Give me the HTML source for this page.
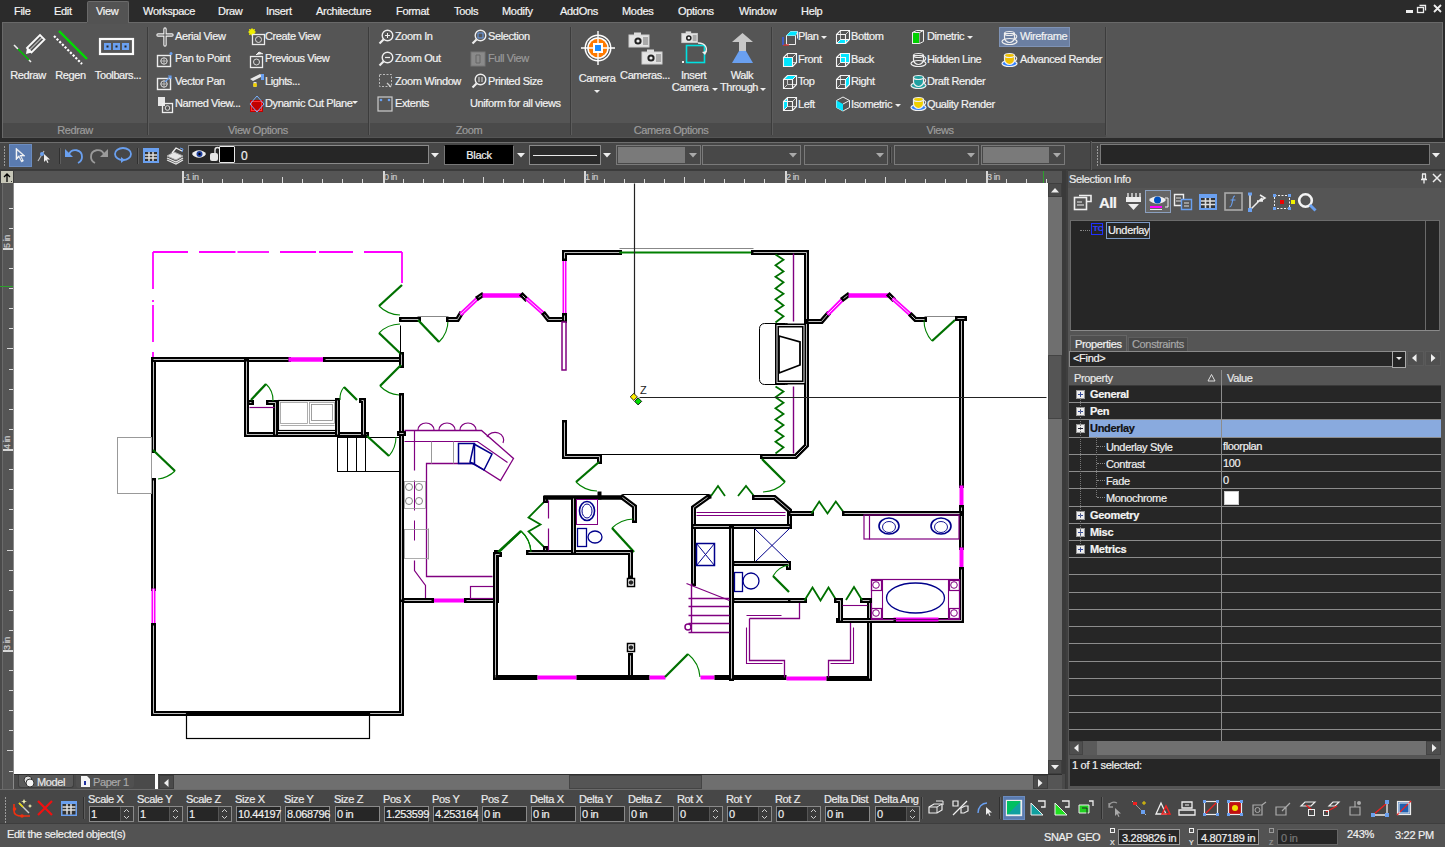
<!DOCTYPE html><html><head><meta charset="utf-8"><style>
*{margin:0;padding:0;box-sizing:border-box}
html,body{width:1445px;height:847px;overflow:hidden;background:#2b2b2b;font-family:"Liberation Sans",sans-serif;font-size:12px;color:#f0f0f0}
.a{position:absolute}
.t{position:absolute;white-space:nowrap;color:#f2f2f2;letter-spacing:-0.25px;-webkit-text-stroke:0.2px currentColor}
svg{position:absolute;overflow:visible}
</style></head><body><div class="a" style="left:0px;top:0px;width:1445px;height:22px;background:#2b2b2b"></div>
<div class="a" style="left:87px;top:1px;width:42px;height:22px;background:#535353;border:1px solid #6a6a6a;border-bottom:none;border-radius:2px 2px 0 0"></div>
<div class="t" style="left:14px;top:5px;font-size:11px;line-height:13px;color:#f4f4f4;letter-spacing:-0.3px">File</div>
<div class="t" style="left:54px;top:5px;font-size:11px;line-height:13px;color:#f4f4f4;letter-spacing:-0.3px">Edit</div>
<div class="t" style="left:96px;top:5px;font-size:11px;line-height:13px;color:#f4f4f4;letter-spacing:-0.3px">View</div>
<div class="t" style="left:143px;top:5px;font-size:11px;line-height:13px;color:#f4f4f4;letter-spacing:-0.3px">Workspace</div>
<div class="t" style="left:218px;top:5px;font-size:11px;line-height:13px;color:#f4f4f4;letter-spacing:-0.3px">Draw</div>
<div class="t" style="left:266px;top:5px;font-size:11px;line-height:13px;color:#f4f4f4;letter-spacing:-0.3px">Insert</div>
<div class="t" style="left:316px;top:5px;font-size:11px;line-height:13px;color:#f4f4f4;letter-spacing:-0.3px">Architecture</div>
<div class="t" style="left:396px;top:5px;font-size:11px;line-height:13px;color:#f4f4f4;letter-spacing:-0.3px">Format</div>
<div class="t" style="left:454px;top:5px;font-size:11px;line-height:13px;color:#f4f4f4;letter-spacing:-0.3px">Tools</div>
<div class="t" style="left:502px;top:5px;font-size:11px;line-height:13px;color:#f4f4f4;letter-spacing:-0.3px">Modify</div>
<div class="t" style="left:560px;top:5px;font-size:11px;line-height:13px;color:#f4f4f4;letter-spacing:-0.3px">AddOns</div>
<div class="t" style="left:622px;top:5px;font-size:11px;line-height:13px;color:#f4f4f4;letter-spacing:-0.3px">Modes</div>
<div class="t" style="left:678px;top:5px;font-size:11px;line-height:13px;color:#f4f4f4;letter-spacing:-0.3px">Options</div>
<div class="t" style="left:739px;top:5px;font-size:11px;line-height:13px;color:#f4f4f4;letter-spacing:-0.3px">Window</div>
<div class="t" style="left:801px;top:5px;font-size:11px;line-height:13px;color:#f4f4f4;letter-spacing:-0.3px">Help</div>
<div class="a" style="left:1406px;top:10px;width:7px;height:3px;background:#eee"></div>
<svg style="left:1416px;top:3px" width="12" height="12"><rect x="1.5" y="4.5" width="6" height="5" fill="none" stroke="#eee" stroke-width="1.3"/><path d="M3.5 2.5h6v5" fill="none" stroke="#eee" stroke-width="1.3"/></svg>
<svg style="left:1433px;top:4px" width="10" height="10"><path d="M1 1L8 8M8 1L1 8" stroke="#eee" stroke-width="1.8"/></svg>
<div class="a" style="left:2px;top:22px;width:1441px;height:117px;background:#555555;border:1px solid #696969;border-right-color:#6d6d6d;border-bottom-color:#696969"></div>
<div class="a" style="left:87px;top:22px;width:41px;height:2px;background:#535353"></div>
<div class="a" style="left:3px;top:123px;width:1103px;height:14px;background:#4a4a4a"></div>
<div class="a" style="left:147px;top:27px;width:1px;height:108px;background:#3c3c3c"></div>
<div class="a" style="left:148px;top:27px;width:1px;height:108px;background:#5c5c5c"></div>
<div class="a" style="left:368px;top:27px;width:1px;height:108px;background:#3c3c3c"></div>
<div class="a" style="left:369px;top:27px;width:1px;height:108px;background:#5c5c5c"></div>
<div class="a" style="left:570px;top:27px;width:1px;height:108px;background:#3c3c3c"></div>
<div class="a" style="left:571px;top:27px;width:1px;height:108px;background:#5c5c5c"></div>
<div class="a" style="left:771px;top:27px;width:1px;height:108px;background:#3c3c3c"></div>
<div class="a" style="left:772px;top:27px;width:1px;height:108px;background:#5c5c5c"></div>
<div class="a" style="left:1105px;top:27px;width:1px;height:108px;background:#3c3c3c"></div>
<div class="a" style="left:1106px;top:27px;width:1px;height:108px;background:#5c5c5c"></div>
<div class="t" style="left:15px;width:120px;text-align:center;top:123px;font-size:11px;line-height:14px;color:#9c9c9c;letter-spacing:-0.4px">Redraw</div>
<div class="t" style="left:198px;width:120px;text-align:center;top:123px;font-size:11px;line-height:14px;color:#9c9c9c;letter-spacing:-0.4px">View Options</div>
<div class="t" style="left:409px;width:120px;text-align:center;top:123px;font-size:11px;line-height:14px;color:#9c9c9c;letter-spacing:-0.4px">Zoom</div>
<div class="t" style="left:611px;width:120px;text-align:center;top:123px;font-size:11px;line-height:14px;color:#9c9c9c;letter-spacing:-0.4px">Camera Options</div>
<div class="t" style="left:880px;width:120px;text-align:center;top:123px;font-size:11px;line-height:14px;color:#9c9c9c;letter-spacing:-0.4px">Views</div>
<svg style="left:10px;top:30px" width="40" height="36">
<line x1="4" y1="15" x2="8" y2="19" stroke="#eee" stroke-width="1.6"/>
<line x1="8" y1="19" x2="19" y2="30" stroke="#00c000" stroke-width="1.6"/>
<line x1="19" y1="30" x2="21" y2="32" stroke="#eee" stroke-width="1.6"/>
<g transform="translate(1,-3)"><path d="M16 21 L29 8 L33.5 12.5 L20.5 25.5 Z" fill="none" stroke="#fafafa" stroke-width="1.8"/>
<path d="M16 21 L15 27 L20.5 25.5 Z" fill="#fafafa"/>
<path d="M18.5 23 L31 10.5" stroke="#fafafa" stroke-width="0.9"/></g>
</svg>
<svg style="left:52px;top:28px" width="40" height="38">
<line x1="7" y1="3" x2="35" y2="31" stroke="#00dd00" stroke-width="2.4"/>
<line x1="2" y1="8" x2="30" y2="36" stroke="#ffffff" stroke-width="2.2" stroke-dasharray="2.2 1.6"/>
</svg>
<svg style="left:98px;top:37px" width="38" height="20">
<rect x="2" y="2" width="33" height="15" fill="none" stroke="#fafafa" stroke-width="2.2"/>
<rect x="6" y="6" width="7" height="7" fill="#6aa0f0"/><rect x="15" y="6" width="7" height="7" fill="#6aa0f0"/><rect x="24" y="6" width="7" height="7" fill="#6aa0f0"/>
<rect x="8.5" y="8.5" width="2" height="2" fill="#222"/><rect x="17.5" y="8.5" width="2" height="2" fill="#222"/><rect x="26.5" y="8.5" width="2" height="2" fill="#222"/>
</svg>
<div class="t" style="left:-22px;top:69px;font-size:11px;line-height:13px;color:#f2f2f2;letter-spacing:-0.4px;width:100px;text-align:center">Redraw</div>
<div class="t" style="left:20.5px;top:69px;font-size:11px;line-height:13px;color:#f2f2f2;letter-spacing:-0.4px;width:100px;text-align:center">Regen</div>
<div class="t" style="left:68px;top:69px;font-size:11px;line-height:13px;color:#f2f2f2;letter-spacing:-0.4px;width:100px;text-align:center">Toolbars...</div>
<svg style="left:156px;top:28px" width="18" height="18"><path d="M9 1v16M2 7h14" stroke="#f2f2f2" stroke-width="3.4" stroke-linecap="round"/><path d="M9 1v16M2 7h14" stroke="#555" stroke-width="1.2" stroke-linecap="round"/></svg>
<svg style="left:156px;top:52px" width="16" height="16"><rect x="1.5" y="3.5" width="13" height="11" fill="none" stroke="#ececec" stroke-width="1.4"/><circle cx="8" cy="9" r="3.2" fill="none" stroke="#ddd" stroke-width="1"/><path d="M8 5.5v7M4.5 9h7" stroke="#ccc" stroke-width="0.8"/><circle cx="15" cy="1.5" r="1.5" fill="#6aa0f0"/></svg>
<svg style="left:156px;top:75px" width="16" height="16"><rect x="1.5" y="3.5" width="13" height="11" fill="none" stroke="#ececec" stroke-width="1.4"/><circle cx="8" cy="9" r="3.2" fill="none" stroke="#ddd" stroke-width="1"/><path d="M8 5.5v7M4.5 9h7" stroke="#ccc" stroke-width="0.8"/><path d="M9 7L15 1M12 1h3v3" stroke="#6aa0f0" stroke-width="1.2" fill="none"/></svg>
<svg style="left:157px;top:96px" width="18" height="18"><rect x="1" y="1" width="7" height="9" fill="#e6e6e6"/><rect x="5.5" y="7.5" width="10" height="9" fill="none" stroke="#eee" stroke-width="1.3"/><circle cx="10.5" cy="12" r="2.3" fill="none" stroke="#ddd"/></svg>
<div class="t" style="left:175px;top:30px;font-size:11px;line-height:13px;color:#f2f2f2;letter-spacing:-0.4px">Aerial View</div>
<div class="t" style="left:175px;top:52px;font-size:11px;line-height:13px;color:#f2f2f2;letter-spacing:-0.4px">Pan to Point</div>
<div class="t" style="left:175px;top:75px;font-size:11px;line-height:13px;color:#f2f2f2;letter-spacing:-0.4px">Vector Pan</div>
<div class="t" style="left:175px;top:97px;font-size:11px;line-height:13px;color:#f2f2f2;letter-spacing:-0.4px">Named View...</div>
<svg style="left:248px;top:28px" width="18" height="18"><circle cx="4" cy="4" r="3" fill="#f0f000"/><path d="M4 0v8M0 4h8M1 1l6 6M7 1L1 7" stroke="#f0f000" stroke-width="0.8"/><rect x="4.5" y="6.5" width="12" height="10" fill="none" stroke="#ececec" stroke-width="1.3"/><circle cx="10.5" cy="11.5" r="3" fill="none" stroke="#ddd"/></svg>
<svg style="left:248px;top:51px" width="18" height="18"><path d="M8 4l3-3 4 2" fill="#eee" stroke="#eee"/><rect x="2.5" y="5.5" width="12" height="11" fill="none" stroke="#ececec" stroke-width="1.3"/><circle cx="8.5" cy="11" r="3" fill="none" stroke="#ddd"/></svg>
<svg style="left:248px;top:73px" width="18" height="18"><path d="M2 6l10-5 3 2-10 5z" fill="#e8e8e8"/><rect x="13" y="1" width="3" height="6" fill="#6aa0f0"/><path d="M7 9v5" stroke="#ddd" stroke-width="3"/><circle cx="7" cy="12" r="2" fill="#f0d000"/></svg>
<svg style="left:248px;top:95px" width="18" height="18"><rect x="2" y="5" width="13" height="12" fill="#c00000"/><rect x="3.5" y="6.5" width="10" height="9" fill="none" stroke="#ff3030" stroke-width="1"/><path d="M9 1l7 8-7 8-7-8z" fill="none" stroke="#7ab0ff" stroke-width="1"/></svg>
<div class="t" style="left:265px;top:30px;font-size:11px;line-height:13px;color:#f2f2f2;letter-spacing:-0.4px">Create View</div>
<div class="t" style="left:265px;top:52px;font-size:11px;line-height:13px;color:#f2f2f2;letter-spacing:-0.4px">Previous View</div>
<div class="t" style="left:265px;top:75px;font-size:11px;line-height:13px;color:#f2f2f2;letter-spacing:-0.4px">Lights...</div>
<div class="t" style="left:265px;top:97px;font-size:11px;line-height:13px;color:#f2f2f2;letter-spacing:-0.4px">Dynamic Cut Plane</div>
<svg style="left:352px;top:101px" width="7" height="4"><path d="M0 0h6l-3 3z" fill="#eee"/></svg>
<svg style="left:378px;top:29px" width="16" height="16"><circle cx="9.5" cy="6.5" r="5.3" fill="none" stroke="#eee" stroke-width="1.4"/><path d="M5.5 10.5L1.5 14.5" stroke="#eee" stroke-width="2.2"/><path d="M9.5 4v5M7 6.5h5" stroke="#eee" stroke-width="1"/></svg>
<svg style="left:378px;top:51px" width="16" height="16"><circle cx="9.5" cy="6.5" r="5.3" fill="none" stroke="#eee" stroke-width="1.4"/><path d="M5.5 10.5L1.5 14.5" stroke="#eee" stroke-width="2.2"/><path d="M7 6.5h5" stroke="#eee" stroke-width="1.2"/></svg>
<svg style="left:378px;top:73px" width="16" height="16"><rect x="1.5" y="1.5" width="12" height="12" fill="none" stroke="#bbb" stroke-width="1" stroke-dasharray="2 1.5"/><path d="M9 10l4 4" stroke="#ccc" stroke-width="1.3"/></svg>
<svg style="left:377px;top:96px" width="16" height="16"><rect x="1" y="1" width="14" height="14" fill="none" stroke="#ccc" stroke-width="1.2"/><circle cx="4" cy="4" r="1.3" fill="#6aa0f0"/><circle cx="12" cy="4" r="1.3" fill="#6aa0f0"/></svg>
<div class="t" style="left:395px;top:30px;font-size:11px;line-height:13px;color:#f2f2f2;letter-spacing:-0.4px">Zoom In</div>
<div class="t" style="left:395px;top:52px;font-size:11px;line-height:13px;color:#f2f2f2;letter-spacing:-0.4px">Zoom Out</div>
<div class="t" style="left:395px;top:75px;font-size:11px;line-height:13px;color:#f2f2f2;letter-spacing:-0.4px">Zoom Window</div>
<div class="t" style="left:395px;top:97px;font-size:11px;line-height:13px;color:#f2f2f2;letter-spacing:-0.4px">Extents</div>
<svg style="left:471px;top:29px" width="16" height="16"><circle cx="9.5" cy="6.5" r="5.3" fill="none" stroke="#eee" stroke-width="1.4"/><path d="M5.5 10.5L1.5 14.5" stroke="#eee" stroke-width="2.2"/><rect x="7" y="4" width="5" height="5" fill="none" stroke="#6aa0f0" stroke-width="1"/></svg>
<svg style="left:470px;top:51px" width="16" height="16"><rect x="1" y="1" width="14" height="14" fill="#8a8a8a" stroke="#777"/><path d="M6 4h4v8H6z" fill="none" stroke="#666"/></svg>
<svg style="left:471px;top:73px" width="16" height="16"><circle cx="9.5" cy="6.5" r="5.3" fill="none" stroke="#eee" stroke-width="1.4"/><path d="M5.5 10.5L1.5 14.5" stroke="#eee" stroke-width="2.2"/><path d="M8 4v5M11 4v5" stroke="#eee" stroke-width="0.9"/></svg>
<div class="t" style="left:488px;top:30px;font-size:11px;line-height:13px;color:#f2f2f2;letter-spacing:-0.4px">Selection</div>
<div class="t" style="left:488px;top:52px;font-size:11px;line-height:13px;color:#9a9a9a;letter-spacing:-0.4px">Full View</div>
<div class="t" style="left:488px;top:75px;font-size:11px;line-height:13px;color:#f2f2f2;letter-spacing:-0.4px">Printed Size</div>
<div class="t" style="left:470px;top:97px;font-size:11px;line-height:13px;color:#f2f2f2;letter-spacing:-0.4px">Uniform for all views</div>
<svg style="left:581px;top:31px" width="34" height="34">
<circle cx="17" cy="17" r="13.5" fill="#ffffff"/>
<circle cx="17" cy="17" r="12" fill="#555"/>
<circle cx="17" cy="17" r="10.8" fill="#ffffff"/>
<circle cx="17" cy="17" r="9.3" fill="#ff7a00"/>
<path d="M17 0v34M0 17h34" stroke="#fff" stroke-width="1.4"/>
<rect x="12" y="12" width="10" height="10" fill="#fff"/>
<rect x="14" y="14" width="6" height="6" fill="#1a8cff"/>
</svg>
<div class="t" style="left:547px;top:72px;font-size:11px;line-height:13px;color:#f2f2f2;letter-spacing:-0.4px;width:100px;text-align:center">Camera</div>
<svg style="left:594px;top:90px" width="7" height="4"><path d="M0 0h6l-3 3z" fill="#eee"/></svg>
<svg style="left:628px;top:32px" width="24" height="18"><g transform="scale(1.0)"><rect x="1" y="3" width="20" height="12" fill="#e4e4e4" stroke="#cfcfcf"/><rect x="6" y="0.5" width="7" height="3" fill="#ddd"/><circle cx="10" cy="9" r="3.6" fill="#222"/><circle cx="10" cy="9" r="1.6" fill="#eee"/><rect x="15" y="5" width="5" height="8" fill="#aaa"/></g></svg>
<svg style="left:641px;top:49px" width="24" height="18"><g transform="scale(1.0)"><rect x="1" y="3" width="20" height="12" fill="#e4e4e4" stroke="#cfcfcf"/><rect x="6" y="0.5" width="7" height="3" fill="#ddd"/><circle cx="10" cy="9" r="3.6" fill="#222"/><circle cx="10" cy="9" r="1.6" fill="#eee"/><rect x="15" y="5" width="5" height="8" fill="#aaa"/></g></svg>
<div class="t" style="left:595px;top:69px;font-size:11px;line-height:13px;color:#f2f2f2;letter-spacing:-0.4px;width:100px;text-align:center">Cameras...</div>
<svg style="left:681px;top:31px" width="19" height="14"><g transform="scale(0.78)"><rect x="1" y="3" width="20" height="12" fill="#e4e4e4" stroke="#cfcfcf"/><rect x="6" y="0.5" width="7" height="3" fill="#ddd"/><circle cx="10" cy="9" r="3.6" fill="#222"/><circle cx="10" cy="9" r="1.6" fill="#eee"/><rect x="15" y="5" width="5" height="8" fill="#aaa"/></g></svg>
<svg style="left:682px;top:42px" width="30" height="24"><rect x="4.5" y="3.5" width="18" height="17" fill="none" stroke="#00e0e0" stroke-width="1.6"/><path d="M16 1c8 0 10 6 7 10" fill="none" stroke="#eee" stroke-width="1.4"/><path d="M20 10l3 3 2-4" fill="#eee"/><rect x="0" y="19" width="2" height="2" fill="#eee"/></svg>
<div class="t" style="left:643.5px;top:69px;font-size:11px;line-height:13px;color:#f2f2f2;letter-spacing:-0.4px;width:100px;text-align:center">Insert</div>
<div class="t" style="left:640px;top:81px;font-size:11px;line-height:13px;color:#f2f2f2;letter-spacing:-0.4px;width:100px;text-align:center">Camera</div>
<svg style="left:712px;top:88px" width="7" height="4"><path d="M0 0h6l-3 3z" fill="#eee"/></svg>
<svg style="left:731px;top:32px" width="24" height="32"><path d="M1 10L11.5 1L22 10H15v12H8V10z" fill="#c8c8c8"/><path d="M8 19h7l7 12H1z" fill="#6aa0f0"/></svg>
<div class="t" style="left:692px;top:69px;font-size:11px;line-height:13px;color:#f2f2f2;letter-spacing:-0.4px;width:100px;text-align:center">Walk</div>
<div class="t" style="left:689px;top:81px;font-size:11px;line-height:13px;color:#f2f2f2;letter-spacing:-0.4px;width:100px;text-align:center">Through</div>
<svg style="left:760px;top:88px" width="7" height="4"><path d="M0 0h6l-3 3z" fill="#eee"/></svg>
<svg style="left:781px;top:29px" width="18" height="18"><path d="M5.5 6.5h9v9h-9zM9.5 2.5h7v7M5.5 6.5l4-4M14.5 6.5l2-4" fill="none" stroke="#eee"/><path d="M9.5 2.5h7l-2 4h-9z" fill="#00e5ff"/><path d="M2 16h6" stroke="#e03030" stroke-width="1.3"/><path d="M2 8v8" stroke="#3060ff" stroke-width="1.3"/></svg>
<svg style="left:782px;top:52px" width="16" height="16"><path d="M1.5 5.5h9v9h-9zM5.5 1.5h9v9h-9zM1.5 5.5l4-4M10.5 5.5l4-4M10.5 14.5l4-4M1.5 14.5l4-4" fill="none" stroke="#d8d8d8" stroke-width="0.9"/><path d="M1.5 5.5h9v9h-9z" fill="#00e5ff" stroke="#f4f4f4" stroke-width="1"/><path d="M1.5 5.5h9v9h-9zM1.5 5.5l4-4h9v9l-4 4" fill="none" stroke="#f4f4f4" stroke-width="1.1"/></svg>
<svg style="left:782px;top:74px" width="16" height="16"><path d="M1.5 5.5h9v9h-9zM5.5 1.5h9v9h-9zM1.5 5.5l4-4M10.5 5.5l4-4M10.5 14.5l4-4M1.5 14.5l4-4" fill="none" stroke="#d8d8d8" stroke-width="0.9"/><path d="M1.5 5.5l4-4h9l-4 4z" fill="#00e5ff" stroke="#f4f4f4" stroke-width="1"/><path d="M1.5 5.5h9v9h-9zM1.5 5.5l4-4h9v9l-4 4" fill="none" stroke="#f4f4f4" stroke-width="1.1"/></svg>
<svg style="left:782px;top:96px" width="16" height="16"><path d="M1.5 5.5h9v9h-9zM5.5 1.5h9v9h-9zM1.5 5.5l4-4M10.5 5.5l4-4M10.5 14.5l4-4M1.5 14.5l4-4" fill="none" stroke="#d8d8d8" stroke-width="0.9"/><path d="M1.5 5.5l4-4v9l-4 4z" fill="#00e5ff" stroke="#f4f4f4" stroke-width="1"/><path d="M1.5 5.5h9v9h-9zM1.5 5.5l4-4h9v9l-4 4" fill="none" stroke="#f4f4f4" stroke-width="1.1"/></svg>
<svg style="left:835px;top:29px" width="16" height="16"><path d="M1.5 5.5h9v9h-9zM5.5 1.5h9v9h-9zM1.5 5.5l4-4M10.5 5.5l4-4M10.5 14.5l4-4M1.5 14.5l4-4" fill="none" stroke="#d8d8d8" stroke-width="0.9"/><path d="M1.5 14.5l4-4h9l-4 4z" fill="#00e5ff" stroke="#f4f4f4" stroke-width="1"/><path d="M1.5 5.5h9v9h-9zM1.5 5.5l4-4h9v9l-4 4" fill="none" stroke="#f4f4f4" stroke-width="1.1"/></svg>
<svg style="left:835px;top:52px" width="16" height="16"><path d="M1.5 5.5h9v9h-9zM5.5 1.5h9v9h-9zM1.5 5.5l4-4M10.5 5.5l4-4M10.5 14.5l4-4M1.5 14.5l4-4" fill="none" stroke="#d8d8d8" stroke-width="0.9"/><path d="M5.5 1.5h9v9h-9z" fill="#00e5ff" stroke="#f4f4f4" stroke-width="1"/><path d="M1.5 5.5h9v9h-9zM1.5 5.5l4-4h9v9l-4 4" fill="none" stroke="#f4f4f4" stroke-width="1.1"/></svg>
<svg style="left:835px;top:74px" width="16" height="16"><path d="M1.5 5.5h9v9h-9zM5.5 1.5h9v9h-9zM1.5 5.5l4-4M10.5 5.5l4-4M10.5 14.5l4-4M1.5 14.5l4-4" fill="none" stroke="#d8d8d8" stroke-width="0.9"/><path d="M10.5 5.5l4-4v9l-4 4z" fill="#00e5ff" stroke="#f4f4f4" stroke-width="1"/><path d="M1.5 5.5h9v9h-9zM1.5 5.5l4-4h9v9l-4 4" fill="none" stroke="#f4f4f4" stroke-width="1.1"/></svg>
<svg style="left:835px;top:96px" width="16" height="16"><path d="M8 1l6.5 3.5v7L8 15 1.5 11.5v-7z" fill="none" stroke="#eee"/><path d="M1.5 4.5L8 8v7l-6.5-3.5z" fill="#00e5ff"/><path d="M8 8l6.5-3.5" stroke="#eee"/></svg>
<div class="t" style="left:798px;top:30px;font-size:11px;line-height:13px;color:#f2f2f2;letter-spacing:-0.4px">Plan</div>
<div class="t" style="left:798px;top:53px;font-size:11px;line-height:13px;color:#f2f2f2;letter-spacing:-0.4px">Front</div>
<div class="t" style="left:798px;top:75px;font-size:11px;line-height:13px;color:#f2f2f2;letter-spacing:-0.4px">Top</div>
<div class="t" style="left:798px;top:98px;font-size:11px;line-height:13px;color:#f2f2f2;letter-spacing:-0.4px">Left</div>
<svg style="left:821px;top:36px" width="7" height="4"><path d="M0 0h6l-3 3z" fill="#eee"/></svg>
<div class="t" style="left:851px;top:30px;font-size:11px;line-height:13px;color:#f2f2f2;letter-spacing:-0.4px">Bottom</div>
<div class="t" style="left:851px;top:53px;font-size:11px;line-height:13px;color:#f2f2f2;letter-spacing:-0.4px">Back</div>
<div class="t" style="left:851px;top:75px;font-size:11px;line-height:13px;color:#f2f2f2;letter-spacing:-0.4px">Right</div>
<div class="t" style="left:851px;top:98px;font-size:11px;line-height:13px;color:#f2f2f2;letter-spacing:-0.4px">Isometric</div>
<svg style="left:895px;top:104px" width="7" height="4"><path d="M0 0h6l-3 3z" fill="#eee"/></svg>
<svg style="left:911px;top:29px" width="16" height="16"><rect x="1.5" y="3.5" width="7" height="11" fill="#00d000" stroke="#eee"/><path d="M8.5 3.5l4-2v11l-4 2M1.5 3.5l4-2h7" fill="#555" stroke="#eee"/></svg>
<svg style="left:910px;top:51px" width="18" height="17"><ellipse cx="8.5" cy="12.5" rx="7.5" ry="3" fill="none" stroke="#eee" stroke-width="1.2"/><path d="M3.5 4.5v4a5 5 0 0 0 10 0v-4z" fill="none" stroke="#eee" stroke-width="1.2"/><path d="M13.5 5.5c3 0 3 4 0 4" fill="none" stroke="#eee" stroke-width="1.1"/><ellipse cx="8.5" cy="4.5" rx="5" ry="2" fill="none" stroke="#eee" stroke-width="1.2"/></svg>
<svg style="left:910px;top:73px" width="18" height="17"><ellipse cx="8.5" cy="12.5" rx="7.5" ry="3" fill="#20a0a0" stroke="#eee" stroke-width="1.2"/><path d="M3.5 4.5v4a5 5 0 0 0 10 0v-4z" fill="#20a0a0" stroke="#eee" stroke-width="1.2"/><path d="M13.5 5.5c3 0 3 4 0 4" fill="none" stroke="#eee" stroke-width="1.1"/><ellipse cx="8.5" cy="4.5" rx="5" ry="2" fill="#20a0a0" stroke="#eee" stroke-width="1.2"/></svg>
<svg style="left:910px;top:95px" width="18" height="17"><ellipse cx="8.5" cy="12.5" rx="7.5" ry="3" fill="#3080ff" stroke="#eee" stroke-width="1.2"/><path d="M3.5 4.5v4a5 5 0 0 0 10 0v-4z" fill="#f0d000" stroke="#eee" stroke-width="1.2"/><path d="M13.5 5.5c3 0 3 4 0 4" fill="none" stroke="#eee" stroke-width="1.1"/><ellipse cx="8.5" cy="4.5" rx="5" ry="2" fill="#f0d000" stroke="#eee" stroke-width="1.2"/></svg>
<div class="t" style="left:927px;top:30px;font-size:11px;line-height:13px;color:#f2f2f2;letter-spacing:-0.4px">Dimetric</div>
<div class="t" style="left:927px;top:53px;font-size:11px;line-height:13px;color:#f2f2f2;letter-spacing:-0.4px">Hidden Line</div>
<div class="t" style="left:927px;top:75px;font-size:11px;line-height:13px;color:#f2f2f2;letter-spacing:-0.4px">Draft Render</div>
<div class="t" style="left:927px;top:98px;font-size:11px;line-height:13px;color:#f2f2f2;letter-spacing:-0.4px">Quality Render</div>
<svg style="left:967px;top:36px" width="7" height="4"><path d="M0 0h6l-3 3z" fill="#eee"/></svg>
<div class="a" style="left:999px;top:27px;width:71px;height:20px;background:#6b7fa2;border:1px solid #7f93b6"></div>
<svg style="left:1001px;top:29px" width="18" height="17"><ellipse cx="8.5" cy="12.5" rx="7.5" ry="3" fill="none" stroke="#eee" stroke-width="1.2"/><path d="M3.5 4.5v4a5 5 0 0 0 10 0v-4z" fill="none" stroke="#eee" stroke-width="1.2"/><path d="M13.5 5.5c3 0 3 4 0 4" fill="none" stroke="#eee" stroke-width="1.1"/><ellipse cx="8.5" cy="4.5" rx="5" ry="2" fill="none" stroke="#eee" stroke-width="1.2"/></svg>
<svg style="left:1001px;top:51px" width="18" height="17"><ellipse cx="8.5" cy="12.5" rx="7.5" ry="3" fill="#3080ff" stroke="#eee" stroke-width="1.2"/><path d="M3.5 4.5v4a5 5 0 0 0 10 0v-4z" fill="#f0c000" stroke="#eee" stroke-width="1.2"/><path d="M13.5 5.5c3 0 3 4 0 4" fill="none" stroke="#eee" stroke-width="1.1"/><ellipse cx="8.5" cy="4.5" rx="5" ry="2" fill="#f0c000" stroke="#eee" stroke-width="1.2"/></svg>
<div class="t" style="left:1020px;top:30px;font-size:11px;line-height:13px;color:#f2f2f2;letter-spacing:-0.4px">Wireframe</div>
<div class="t" style="left:1020px;top:53px;font-size:11px;line-height:13px;color:#f2f2f2;letter-spacing:-0.4px">Advanced Render</div>
<div class="a" style="left:0px;top:138px;width:1445px;height:32px;background:#2b2b2b"></div>
<div class="a" style="left:0px;top:142px;width:1445px;height:28px;background:#474747;border-top:1px solid #6e6e6e;border-bottom:1px solid #3a3a3a"></div>
<div class="a" style="left:4px;top:146px;width:1px;height:2px;background:#9a9a9a"></div>
<div class="a" style="left:4px;top:149px;width:1px;height:2px;background:#9a9a9a"></div>
<div class="a" style="left:4px;top:152px;width:1px;height:2px;background:#9a9a9a"></div>
<div class="a" style="left:4px;top:155px;width:1px;height:2px;background:#9a9a9a"></div>
<div class="a" style="left:4px;top:158px;width:1px;height:2px;background:#9a9a9a"></div>
<div class="a" style="left:4px;top:161px;width:1px;height:2px;background:#9a9a9a"></div>
<div class="a" style="left:4px;top:164px;width:1px;height:2px;background:#9a9a9a"></div>
<div class="a" style="left:9px;top:144px;width:23px;height:23px;background:#5a7bb0;border:1px solid #6b8cc0"></div>
<svg style="left:14px;top:147px" width="14" height="16"><path d="M2 1v12l3-3 2.5 5 2-1-2.5-5h4z" fill="#f4f4f4" stroke="#f4f4f4" stroke-width="0.6"/><path d="M3.2 3.5v6.5l1.8-1.8 2.5 5 .6-.3-2.5-5h2.7z" fill="#5a7bb0"/></svg>
<svg style="left:36px;top:147px" width="16" height="16"><path d="M2 14l6-10" stroke="#bbb" stroke-width="1.2"/><circle cx="6" cy="7" r="2" fill="#6aa0f0"/><path d="M8 7v8l2-2 1.5 3 1-.5-1.5-3h3z" fill="#eee"/></svg>
<div class="a" style="left:59px;top:148px;width:1px;height:16px;background:#303030"></div>
<div class="a" style="left:60px;top:148px;width:1px;height:16px;background:#5e5e5e"></div>
<svg style="left:64px;top:146px" width="20" height="18"><path d="M5 8c3-6 13-5 13 3 0 3-2 5-4 6" fill="none" stroke="#6aa0f0" stroke-width="1.8"/><path d="M1 3v8h8z" fill="#6aa0f0"/></svg>
<svg style="left:89px;top:146px" width="20" height="18"><path d="M15 8c-3-6-13-5-13 3 0 3 2 5 4 6" fill="none" stroke="#9a9a9a" stroke-width="1.8"/><path d="M19 3v8h-8z" fill="#9a9a9a"/></svg>
<svg style="left:113px;top:146px" width="20" height="18"><ellipse cx="10" cy="8" rx="8" ry="6" fill="none" stroke="#6aa0f0" stroke-width="1.8"/><path d="M8 11l4 3-4 3z" fill="#6aa0f0"/></svg>
<div class="a" style="left:137px;top:148px;width:1px;height:16px;background:#303030"></div>
<div class="a" style="left:138px;top:148px;width:1px;height:16px;background:#5e5e5e"></div>
<svg style="left:142px;top:147px" width="18" height="17"><rect x="1" y="1" width="16" height="15" fill="#6aa0f0"/><rect x="3" y="5" width="12" height="9" fill="#333"/><path d="M3 8h12M3 11h12M7 5v9M11 5v9" stroke="#ddd" stroke-width="1.5"/></svg>
<svg style="left:166px;top:146px" width="18" height="18"><path d="M1 10l7-4 9 4-7 4z" fill="#e6e6e6" stroke="#aaa"/><path d="M1 12l9 4 7-4M1 14l9 4 7-4" fill="none" stroke="#e6e6e6" stroke-width="1.3"/><path d="M6 7l4-5 6 3" fill="none" stroke="#eee" stroke-width="1.3"/><path d="M14 2l3 1-1 3" fill="none" stroke="#6aa0f0"/></svg>
<div class="a" style="left:188px;top:145px;width:241px;height:19px;background:#262626;border:1px solid #8a8a8a"></div>
<svg style="left:191px;top:148px" width="16" height="12"><path d="M1 6c3-5 11-5 14 0-3 5-11 5-14 0z" fill="#eee"/><circle cx="8.5" cy="6" r="3" fill="#2040a0"/><circle cx="8.5" cy="6" r="1.2" fill="#000"/></svg>
<svg style="left:208px;top:147px" width="14" height="15"><rect x="2" y="6" width="8" height="8" rx="2" fill="#e6e6e6"/><path d="M7 6V3a2.5 2.5 0 015 0v2" fill="none" stroke="#e6e6e6" stroke-width="1.4"/></svg>
<div class="a" style="left:219px;top:146px;width:16px;height:17px;background:#000;border:1.5px solid #e8e8e8;border-radius:1px"></div>
<div class="t" style="left:241px;top:149px;font-size:12px;line-height:14px;color:#f0f0f0;">0</div>
<svg style="left:431px;top:153px" width="9" height="5"><path d="M0 0h8l-4 4.5z" fill="#eee"/></svg>
<div class="a" style="left:444px;top:145px;width:70px;height:20px;background:#000;border:1px solid #777;border-top-color:#000"></div>
<div class="t" style="left:444px;width:70px;text-align:center;top:148px;font-size:11px;line-height:14px;color:#f2f2f2;letter-spacing:-0.3px">Black</div>
<svg style="left:517px;top:153px" width="9" height="5"><path d="M0 0h8l-4 4.5z" fill="#eee"/></svg>
<div class="a" style="left:529px;top:145px;width:72px;height:20px;background:#2a2a2a;border:1px solid #8a8a8a"></div>
<div class="a" style="left:533px;top:155px;width:64px;height:1px;background:#e8e8e8"></div>
<svg style="left:603px;top:153px" width="9" height="5"><path d="M0 0h8l-4 4.5z" fill="#eee"/></svg>
<div class="a" style="left:616px;top:145px;width:85px;height:20px;background:#484848;border:1px solid #7a7a7a"></div>
<div class="a" style="left:618px;top:147px;width:67px;height:16px;background:#7a7a7a"></div>
<svg style="left:689px;top:153px" width="9" height="5"><path d="M0 0h8l-4 4.5z" fill="#aaa"/></svg>
<div class="a" style="left:702px;top:145px;width:99px;height:20px;background:#484848;border:1px solid #7a7a7a"></div>
<svg style="left:789px;top:153px" width="9" height="5"><path d="M0 0h8l-4 4.5z" fill="#aaa"/></svg>
<div class="a" style="left:804px;top:145px;width:84px;height:20px;background:#484848;border:1px solid #7a7a7a"></div>
<svg style="left:876px;top:153px" width="9" height="5"><path d="M0 0h8l-4 4.5z" fill="#aaa"/></svg>
<div class="a" style="left:890px;top:147px;width:1px;height:16px;background:#333"></div>
<div class="a" style="left:891px;top:147px;width:1px;height:16px;background:#5e5e5e"></div>
<div class="a" style="left:894px;top:145px;width:85px;height:20px;background:#484848;border:1px solid #7a7a7a"></div>
<svg style="left:967px;top:153px" width="9" height="5"><path d="M0 0h8l-4 4.5z" fill="#aaa"/></svg>
<div class="a" style="left:981px;top:145px;width:84px;height:20px;background:#484848;border:1px solid #7a7a7a"></div>
<div class="a" style="left:983px;top:147px;width:66px;height:16px;background:#7a7a7a"></div>
<svg style="left:1053px;top:153px" width="9" height="5"><path d="M0 0h8l-4 4.5z" fill="#aaa"/></svg>
<div class="a" style="left:1090px;top:141px;width:1px;height:29px;background:#3a3a3a"></div>
<div class="a" style="left:1091px;top:141px;width:1px;height:29px;background:#5a5a5a"></div>
<div class="a" style="left:1097px;top:146px;width:1px;height:2px;background:#9a9a9a"></div>
<div class="a" style="left:1097px;top:149px;width:1px;height:2px;background:#9a9a9a"></div>
<div class="a" style="left:1097px;top:152px;width:1px;height:2px;background:#9a9a9a"></div>
<div class="a" style="left:1097px;top:155px;width:1px;height:2px;background:#9a9a9a"></div>
<div class="a" style="left:1097px;top:158px;width:1px;height:2px;background:#9a9a9a"></div>
<div class="a" style="left:1097px;top:161px;width:1px;height:2px;background:#9a9a9a"></div>
<div class="a" style="left:1097px;top:164px;width:1px;height:2px;background:#9a9a9a"></div>
<div class="a" style="left:1100px;top:144px;width:330px;height:21px;background:#262626;border:1px solid #7a7a7a"></div>
<svg style="left:1432px;top:153px" width="9" height="5"><path d="M0 0h8l-4 4.5z" fill="#eee"/></svg>
<div class="a" style="left:0px;top:170px;width:1065px;height:14px;background:#3b3b3b"></div>
<div class="a" style="left:14px;top:170px;width:1048px;height:13px;background:#555;border-top:1px solid #3c3c3c"></div>
<div class="a" style="left:1px;top:171px;width:12px;height:12px;background:#c7c7b8"></div>
<svg style="left:2px;top:172px" width="11" height="11"><path d="M5 10V2M2 5l3-3 3 3" stroke="#000" stroke-width="1.3" fill="none"/><path d="M9 9l1 1" stroke="#333"/></svg>
<svg style="left:0;top:0" width="1445" height="200"><rect x="182" y="171" width="2" height="12" fill="#d8d8d8"/><rect x="202" y="179" width="1" height="4" fill="#d8d8d8"/><rect x="222" y="179" width="1" height="4" fill="#d8d8d8"/><rect x="242" y="179" width="1" height="4" fill="#d8d8d8"/><rect x="262" y="179" width="1" height="4" fill="#d8d8d8"/><rect x="282" y="177" width="1" height="6" fill="#d8d8d8"/><rect x="302" y="179" width="1" height="4" fill="#d8d8d8"/><rect x="322" y="179" width="1" height="4" fill="#d8d8d8"/><rect x="342" y="179" width="1" height="4" fill="#d8d8d8"/><rect x="362" y="179" width="1" height="4" fill="#d8d8d8"/><rect x="383" y="171" width="2" height="12" fill="#d8d8d8"/><rect x="403" y="179" width="1" height="4" fill="#d8d8d8"/><rect x="423" y="179" width="1" height="4" fill="#d8d8d8"/><rect x="443" y="179" width="1" height="4" fill="#d8d8d8"/><rect x="463" y="179" width="1" height="4" fill="#d8d8d8"/><rect x="483" y="177" width="1" height="6" fill="#d8d8d8"/><rect x="503" y="179" width="1" height="4" fill="#d8d8d8"/><rect x="523" y="179" width="1" height="4" fill="#d8d8d8"/><rect x="543" y="179" width="1" height="4" fill="#d8d8d8"/><rect x="564" y="179" width="1" height="4" fill="#d8d8d8"/><rect x="584" y="171" width="2" height="12" fill="#d8d8d8"/><rect x="604" y="179" width="1" height="4" fill="#d8d8d8"/><rect x="624" y="179" width="1" height="4" fill="#d8d8d8"/><rect x="644" y="179" width="1" height="4" fill="#d8d8d8"/><rect x="664" y="179" width="1" height="4" fill="#d8d8d8"/><rect x="684" y="177" width="1" height="6" fill="#d8d8d8"/><rect x="704" y="179" width="1" height="4" fill="#d8d8d8"/><rect x="724" y="179" width="1" height="4" fill="#d8d8d8"/><rect x="744" y="179" width="1" height="4" fill="#d8d8d8"/><rect x="764" y="179" width="1" height="4" fill="#d8d8d8"/><rect x="785" y="171" width="2" height="12" fill="#d8d8d8"/><rect x="805" y="179" width="1" height="4" fill="#d8d8d8"/><rect x="825" y="179" width="1" height="4" fill="#d8d8d8"/><rect x="845" y="179" width="1" height="4" fill="#d8d8d8"/><rect x="865" y="179" width="1" height="4" fill="#d8d8d8"/><rect x="885" y="177" width="1" height="6" fill="#d8d8d8"/><rect x="905" y="179" width="1" height="4" fill="#d8d8d8"/><rect x="925" y="179" width="1" height="4" fill="#d8d8d8"/><rect x="945" y="179" width="1" height="4" fill="#d8d8d8"/><rect x="966" y="179" width="1" height="4" fill="#d8d8d8"/><rect x="986" y="171" width="2" height="12" fill="#d8d8d8"/><rect x="1006" y="179" width="1" height="4" fill="#d8d8d8"/><rect x="1026" y="179" width="1" height="4" fill="#d8d8d8"/><rect x="1046" y="179" width="1" height="4" fill="#d8d8d8"/><rect x="1043" y="171" width="1" height="12" fill="#2ca02c"/></svg>
<div class="t" style="left:183px;top:172px;font-size:9px;line-height:11px;color:#c8c8c8;letter-spacing:-0.4px">-1 in</div>
<div class="t" style="left:384px;top:172px;font-size:9px;line-height:11px;color:#c8c8c8;letter-spacing:-0.4px">0 in</div>
<div class="t" style="left:585px;top:172px;font-size:9px;line-height:11px;color:#c8c8c8;letter-spacing:-0.4px">1 in</div>
<div class="t" style="left:786px;top:172px;font-size:9px;line-height:11px;color:#c8c8c8;letter-spacing:-0.4px">2 in</div>
<div class="t" style="left:987px;top:172px;font-size:9px;line-height:11px;color:#c8c8c8;letter-spacing:-0.4px">3 in</div>
<div class="a" style="left:0px;top:183px;width:14px;height:591px;background:#4a4a4a"></div>
<div class="a" style="left:2px;top:183px;width:11px;height:591px;background:#555;border-left:1px solid #6a6a6a"></div>
<div class="a" style="left:13px;top:183px;width:1px;height:591px;background:#8a8a8a"></div>
<svg style="left:0;top:0" width="20" height="847"><rect x="9" y="208" width="4" height="1" fill="#d8d8d8"/><rect x="9" y="228" width="4" height="1" fill="#d8d8d8"/><rect x="3" y="248" width="10" height="2" fill="#d8d8d8"/><rect x="9" y="268" width="4" height="1" fill="#d8d8d8"/><rect x="9" y="288" width="4" height="1" fill="#d8d8d8"/><rect x="9" y="308" width="4" height="1" fill="#d8d8d8"/><rect x="9" y="328" width="4" height="1" fill="#d8d8d8"/><rect x="7" y="348" width="6" height="1" fill="#d8d8d8"/><rect x="9" y="369" width="4" height="1" fill="#d8d8d8"/><rect x="9" y="389" width="4" height="1" fill="#d8d8d8"/><rect x="9" y="409" width="4" height="1" fill="#d8d8d8"/><rect x="9" y="429" width="4" height="1" fill="#d8d8d8"/><rect x="3" y="449" width="10" height="2" fill="#d8d8d8"/><rect x="9" y="469" width="4" height="1" fill="#d8d8d8"/><rect x="9" y="489" width="4" height="1" fill="#d8d8d8"/><rect x="9" y="509" width="4" height="1" fill="#d8d8d8"/><rect x="9" y="529" width="4" height="1" fill="#d8d8d8"/><rect x="7" y="550" width="6" height="1" fill="#d8d8d8"/><rect x="9" y="570" width="4" height="1" fill="#d8d8d8"/><rect x="9" y="590" width="4" height="1" fill="#d8d8d8"/><rect x="9" y="610" width="4" height="1" fill="#d8d8d8"/><rect x="9" y="630" width="4" height="1" fill="#d8d8d8"/><rect x="3" y="650" width="10" height="2" fill="#d8d8d8"/><rect x="9" y="670" width="4" height="1" fill="#d8d8d8"/><rect x="9" y="690" width="4" height="1" fill="#d8d8d8"/><rect x="9" y="710" width="4" height="1" fill="#d8d8d8"/><rect x="9" y="730" width="4" height="1" fill="#d8d8d8"/><rect x="7" y="750" width="6" height="1" fill="#d8d8d8"/><rect x="9" y="771" width="4" height="1" fill="#d8d8d8"/><rect x="0" y="286" width="13" height="1" fill="#2ca02c"/></svg>
<div class="t" style="left:-8px;top:228px;width:30px;height:10px;font-size:9px;line-height:10px;color:#c8c8c8;transform:rotate(-90deg);transform-origin:15px 5px;text-align:left;letter-spacing:-0.4px">5 in</div>
<div class="t" style="left:-8px;top:429px;width:30px;height:10px;font-size:9px;line-height:10px;color:#c8c8c8;transform:rotate(-90deg);transform-origin:15px 5px;text-align:left;letter-spacing:-0.4px">4 in</div>
<div class="t" style="left:-8px;top:630px;width:30px;height:10px;font-size:9px;line-height:10px;color:#c8c8c8;transform:rotate(-90deg);transform-origin:15px 5px;text-align:left;letter-spacing:-0.4px">3 in</div>
<div class="a" style="left:14px;top:183px;width:1034px;height:591px;background:#ffffff"></div>
<div class="a" style="left:1048px;top:183px;width:14px;height:591px;background:#6f6f6f"></div>
<div class="a" style="left:1048px;top:183px;width:14px;height:14px;background:#4a4a4a;border:1px solid #3e3e3e"></div>
<svg style="left:1051px;top:188px" width="9" height="5"><path d="M0 4.5h8L4 0z" fill="#eee"/></svg>
<div class="a" style="left:1048px;top:355px;width:14px;height:64px;background:#555;border:1px solid #444"></div>
<div class="a" style="left:1048px;top:760px;width:14px;height:14px;background:#4a4a4a;border:1px solid #3e3e3e"></div>
<svg style="left:1051px;top:765px" width="9" height="5"><path d="M0 0h8l-4 4.5z" fill="#eee"/></svg>
<div class="a" style="left:1062px;top:170px;width:4px;height:620px;background:#3a3a3a"></div>
<div class="a" style="left:0px;top:774px;width:1065px;height:16px;background:#4a4a4a"></div>
<div class="a" style="left:0px;top:774px;width:1062px;height:1px;background:#2e2e2e"></div>
<div class="a" style="left:0px;top:774px;width:14px;height:16px;background:#4a4a4a"></div>
<div class="a" style="left:2px;top:774px;width:11px;height:16px;background:#555;border-left:1px solid #6a6a6a"></div>
<div class="a" style="left:13px;top:774px;width:1px;height:16px;background:#8a8a8a"></div>
<div class="a" style="left:18px;top:775px;width:56px;height:13px;background:#5a5a5a;border:1px solid #3e3e3e;border-top:none;border-radius:0 0 3px 3px"></div>
<svg style="left:22px;top:775px" width="13" height="13"><circle cx="6" cy="5" r="4" fill="#ddd" stroke="#333"/><circle cx="8" cy="8" r="4" fill="#f4f4f4" stroke="#333"/></svg>
<div class="t" style="left:37px;top:776px;font-size:11px;line-height:13px;color:#e8e8e8;letter-spacing:-0.4px">Model</div>
<div class="a" style="left:76px;top:775px;width:58px;height:13px;background:#505050;border-radius:0 0 3px 3px"></div>
<svg style="left:80px;top:775px" width="11" height="13"><path d="M1 1h6l3 3v8H1z" fill="#f4f4f4"/><rect x="4" y="6" width="2" height="4" fill="#2030a0"/></svg>
<div class="t" style="left:93px;top:776px;font-size:11px;line-height:13px;color:#a8a8a8;letter-spacing:-0.4px">Paper 1</div>
<div class="a" style="left:155px;top:774px;width:3px;height:16px;background:#ffffff"></div>
<div class="a" style="left:159px;top:775px;width:889px;height:14px;background:#6f6f6f"></div>
<div class="a" style="left:159px;top:775px;width:15px;height:14px;background:#4a4a4a;border:1px solid #3e3e3e"></div>
<svg style="left:164px;top:779px" width="5" height="8"><path d="M4.5 0v8L0 4z" fill="#eee"/></svg>
<div class="a" style="left:569px;top:775px;width:133px;height:14px;background:#555;border:1px solid #444"></div>
<div class="a" style="left:1033px;top:775px;width:15px;height:14px;background:#4a4a4a;border:1px solid #3e3e3e"></div>
<svg style="left:1038px;top:779px" width="5" height="8"><path d="M0 0v8l4.5-4z" fill="#eee"/></svg>
<div class="a" style="left:1048px;top:775px;width:14px;height:14px;background:#555"></div>
<div class="a" style="left:1066px;top:170px;width:379px;height:620px;background:#555555"></div>
<div class="a" style="left:1066px;top:170px;width:2px;height:620px;background:#3f3f3f"></div>
<div class="a" style="left:1068px;top:170px;width:377px;height:1px;background:#3a3a3a"></div>
<div class="a" style="left:1068px;top:171px;width:377px;height:17px;background:#505050"></div>
<div class="t" style="left:1069px;top:173px;font-size:11px;line-height:13px;color:#ececec;letter-spacing:-0.35px">Selection Info</div>
<svg style="left:1419px;top:173px" width="10" height="11"><path d="M3 1h4M3.5 1v5h3V1M2 6.5h6M5 6.5v4" stroke="#eee" stroke-width="1.3" fill="none"/></svg>
<svg style="left:1432px;top:173px" width="10" height="10"><path d="M1 1l8 8M9 1L1 9" stroke="#eee" stroke-width="1.5"/></svg>
<svg style="left:1073px;top:192px" width="20" height="19"><rect x="1.5" y="5.5" width="12" height="12" fill="none" stroke="#eee" stroke-width="1.6"/><path d="M6 3.5h12v6h-5" fill="none" stroke="#eee" stroke-width="1.6"/><path d="M4 10h5M4 13h7" stroke="#eee"/></svg>
<div class="t" style="left:1099px;top:194px;font-size:15px;line-height:17px;color:#f4f4f4;font-weight:bold;letter-spacing:-0.6px">All</div>
<svg style="left:1124px;top:191px" width="19" height="21"><path d="M2 6h15v5H2z" fill="#eee"/><path d="M4 2v4M8 2v4M12 2v4M16 2v4" stroke="#eee" stroke-width="1.3"/><path d="M4 13h11l-5.5 6z" fill="#eee"/></svg>
<div class="a" style="left:1145px;top:190px;width:26px;height:23px;background:#666;border:1px solid #8aa0c0"></div>
<svg style="left:1148px;top:194px" width="21" height="17"><path d="M1 6c4-5 13-5 17 0-4 5-13 5-17 0z" fill="#eee"/><circle cx="9.5" cy="6" r="3.5" fill="#0050c0"/><rect x="2" y="12" width="12" height="2" fill="#ff00ff"/><rect x="2" y="15" width="12" height="1" fill="#eee"/><path d="M17 4h3v9h-3" fill="none" stroke="#eee"/></svg>
<svg style="left:1173px;top:193px" width="21" height="18"><path d="M1.5 1.5h9v11h-9z" fill="none" stroke="#eee" stroke-width="1.4"/><path d="M8.5 6.5h10v10h-10z" fill="#555" stroke="#6aa0f0" stroke-width="1.4"/><path d="M3 5h5M3 8h5M11 10h5M11 13h5" stroke="#eee" stroke-width="0.9"/></svg>
<svg style="left:1198px;top:193px" width="20" height="18"><rect x="1" y="1" width="18" height="16" fill="#6aa0f0"/><rect x="3" y="5" width="14" height="10" fill="#333"/><path d="M3 8h14M3 11.5h14M7.5 5v10M12 5v10" stroke="#ddd" stroke-width="1.6"/></svg>
<svg style="left:1224px;top:192px" width="19" height="19"><rect x="1" y="1" width="17" height="17" fill="#555" stroke="#aaa" stroke-width="1.6"/><path d="M11 4c-2 0-2 2-2.5 5s-1 6-3 6M6.5 8h5" fill="none" stroke="#6aa0f0" stroke-width="1.1"/></svg>
<svg style="left:1247px;top:192px" width="22" height="20"><path d="M3 2v16M3 18l12-12M13 3l5 3-5 3M10 9l6 0" fill="none" stroke="#eee" stroke-width="1.5"/><rect x="1" y="0.5" width="4" height="3" fill="#6aa0f0"/><rect x="1" y="16" width="4" height="4" fill="#6aa0f0"/></svg>
<svg style="left:1272px;top:193px" width="24" height="18"><rect x="2.5" y="2.5" width="15" height="13" fill="none" stroke="#eee" stroke-dasharray="2 1.5"/><rect x="1" y="1" width="3" height="3" fill="#6aa0f0"/><rect x="16" y="1" width="3" height="3" fill="#6aa0f0"/><rect x="1" y="14" width="3" height="3" fill="#6aa0f0"/><rect x="16" y="14" width="3" height="3" fill="#6aa0f0"/><rect x="8" y="7" width="4" height="4" fill="#f00000"/><rect x="19" y="7" width="4" height="4" fill="#f0f000"/></svg>
<svg style="left:1297px;top:192px" width="21" height="21"><circle cx="8.5" cy="8.5" r="6.3" fill="none" stroke="#f4f4f4" stroke-width="2.6"/><path d="M13 13l5.5 5.5" stroke="#6aa0f0" stroke-width="3"/></svg>
<div class="a" style="left:1070px;top:220px;width:370px;height:111px;background:#262626;border:1px solid #6c6c6c;border-bottom:1px solid #8a8a8a"></div>
<div class="a" style="left:1425px;top:221px;width:1px;height:109px;background:#6a6a6a"></div>
<div class="a" style="left:1080px;top:230px;width:12px;height:1px;background:none;border-top:1px dotted #888"></div>
<div class="a" style="left:1091px;top:223px;width:12px;height:12px;background:#262626;border:1px solid #2030ff"></div>
<div class="t" style="left:1093px;top:224px;font-size:8px;line-height:10px;color:#3040ff;font-weight:bold;">TC</div>
<div class="a" style="left:1106px;top:222px;width:44px;height:17px;border:1px solid #7d9ac6"></div>
<div class="t" style="left:1108px;top:224px;font-size:11px;line-height:13px;color:#f2f2f2;letter-spacing:-0.35px">Underlay</div>
<div class="a" style="left:1070px;top:335px;width:57px;height:16px;background:#4f4f4f;border:1px solid #666;border-bottom:none"></div>
<div class="t" style="left:1075px;top:338px;font-size:11px;line-height:13px;color:#f2f2f2;letter-spacing:-0.35px">Properties</div>
<div class="a" style="left:1128px;top:337px;width:60px;height:14px;background:#484848;border:1px solid #5e5e5e;border-bottom:none"></div>
<div class="t" style="left:1132px;top:338px;font-size:11px;line-height:13px;color:#a8a8a8;letter-spacing:-0.35px">Constraints</div>
<div class="a" style="left:1069px;top:351px;width:336px;height:16px;background:#262626;border:1px solid #8a8a8a"></div>
<div class="t" style="left:1073px;top:352px;font-size:11px;line-height:13px;color:#f2f2f2;letter-spacing:-0.3px">&lt;Find&gt;</div>
<div class="a" style="left:1392px;top:351px;width:14px;height:17px;background:#262626;border:1px solid #aaa"></div>
<svg style="left:1396px;top:357px" width="7" height="4"><path d="M0 0h6l-3 3z" fill="#eee"/></svg>
<div class="a" style="left:1407px;top:351px;width:17px;height:15px;background:#505050;border:1px solid #5a5a5a"></div>
<div class="a" style="left:1425px;top:351px;width:16px;height:15px;background:#505050;border:1px solid #5a5a5a"></div>
<svg style="left:1412px;top:354px" width="5" height="8"><path d="M4.5 0v8L0 4z" fill="#eee"/></svg>
<svg style="left:1431px;top:354px" width="5" height="8"><path d="M0 0v8l4.5-4z" fill="#eee"/></svg>
<div class="a" style="left:1069px;top:370px;width:372px;height:371px;background:#8c8c8c"></div>
<div class="a" style="left:1069px;top:370px;width:152px;height:16px;background:#555;border-bottom:1px solid #3a3a3a"></div>
<div class="a" style="left:1222px;top:370px;width:219px;height:16px;background:#555;border-bottom:1px solid #3a3a3a"></div>
<div class="t" style="left:1074px;top:372px;font-size:11px;line-height:13px;color:#e8e8e8;letter-spacing:-0.35px">Property</div>
<div class="t" style="left:1227px;top:372px;font-size:11px;line-height:13px;color:#e8e8e8;letter-spacing:-0.35px">Value</div>
<svg style="left:1207px;top:374px" width="9" height="8"><path d="M4.5 0.5L8 7H1z" fill="none" stroke="#ddd"/></svg>
<div class="a" style="left:1069px;top:386px;width:152px;height:16px;background:#262626"></div>
<div class="a" style="left:1222px;top:386px;width:219px;height:16px;background:#262626"></div>
<div class="a" style="left:1076px;top:390px;width:9px;height:9px;background:#eee;border:1px solid #999"></div>
<div class="a" style="left:1078px;top:394px;width:5px;height:1px;background:#334a9a"></div>
<div class="a" style="left:1080px;top:392px;width:1px;height:5px;background:#334a9a"></div>
<div class="t" style="left:1090px;top:388px;font-size:11px;line-height:13px;color:#f4f4f4;font-weight:bold;letter-spacing:-0.3px">General</div>
<div class="a" style="left:1069px;top:403px;width:152px;height:16px;background:#262626"></div>
<div class="a" style="left:1222px;top:403px;width:219px;height:16px;background:#262626"></div>
<div class="a" style="left:1076px;top:407px;width:9px;height:9px;background:#eee;border:1px solid #999"></div>
<div class="a" style="left:1078px;top:411px;width:5px;height:1px;background:#334a9a"></div>
<div class="a" style="left:1080px;top:409px;width:1px;height:5px;background:#334a9a"></div>
<div class="t" style="left:1090px;top:405px;font-size:11px;line-height:13px;color:#f4f4f4;font-weight:bold;letter-spacing:-0.3px">Pen</div>
<div class="a" style="left:1069px;top:420px;width:152px;height:17px;background:#262626"></div>
<div class="a" style="left:1222px;top:420px;width:219px;height:17px;background:#262626"></div>
<div class="a" style="left:1089px;top:420px;width:132px;height:17px;background:#89aade"></div>
<div class="a" style="left:1222px;top:420px;width:219px;height:17px;background:#89aade"></div>
<div class="a" style="left:1076px;top:424px;width:9px;height:9px;background:#eee;border:1px solid #999"></div>
<div class="a" style="left:1078px;top:428px;width:5px;height:1px;background:#223"></div>
<div class="t" style="left:1090px;top:422px;font-size:11px;line-height:13px;color:#111;font-weight:bold;letter-spacing:-0.3px">Underlay</div>
<div class="a" style="left:1069px;top:438px;width:152px;height:16px;background:#262626"></div>
<div class="a" style="left:1222px;top:438px;width:219px;height:16px;background:#262626"></div>
<div class="t" style="left:1106px;top:441px;font-size:11px;line-height:13px;color:#f0f0f0;letter-spacing:-0.35px">Underlay Style</div>
<div class="a" style="left:1097px;top:446px;width:8px;height:1px;border-top:1px dotted #888"></div>
<div class="t" style="left:1223px;top:440px;font-size:11px;line-height:13px;color:#f0f0f0;letter-spacing:-0.35px">floorplan</div>
<div class="a" style="left:1069px;top:455px;width:152px;height:16px;background:#262626"></div>
<div class="a" style="left:1222px;top:455px;width:219px;height:16px;background:#262626"></div>
<div class="t" style="left:1106px;top:458px;font-size:11px;line-height:13px;color:#f0f0f0;letter-spacing:-0.35px">Contrast</div>
<div class="a" style="left:1097px;top:463px;width:8px;height:1px;border-top:1px dotted #888"></div>
<div class="t" style="left:1223px;top:457px;font-size:11px;line-height:13px;color:#f0f0f0;letter-spacing:-0.35px">100</div>
<div class="a" style="left:1069px;top:472px;width:152px;height:16px;background:#262626"></div>
<div class="a" style="left:1222px;top:472px;width:219px;height:16px;background:#262626"></div>
<div class="t" style="left:1106px;top:475px;font-size:11px;line-height:13px;color:#f0f0f0;letter-spacing:-0.35px">Fade</div>
<div class="a" style="left:1097px;top:480px;width:8px;height:1px;border-top:1px dotted #888"></div>
<div class="t" style="left:1223px;top:474px;font-size:11px;line-height:13px;color:#f0f0f0;letter-spacing:-0.35px">0</div>
<div class="a" style="left:1069px;top:489px;width:152px;height:17px;background:#262626"></div>
<div class="a" style="left:1222px;top:489px;width:219px;height:17px;background:#262626"></div>
<div class="t" style="left:1106px;top:492px;font-size:11px;line-height:13px;color:#f0f0f0;letter-spacing:-0.35px">Monochrome</div>
<div class="a" style="left:1097px;top:497px;width:8px;height:1px;border-top:1px dotted #888"></div>
<div class="a" style="left:1224px;top:491px;width:15px;height:14px;background:#fff;border:1px solid #ccc"></div>
<div class="a" style="left:1069px;top:507px;width:152px;height:16px;background:#262626"></div>
<div class="a" style="left:1222px;top:507px;width:219px;height:16px;background:#262626"></div>
<div class="a" style="left:1076px;top:511px;width:9px;height:9px;background:#eee;border:1px solid #999"></div>
<div class="a" style="left:1078px;top:515px;width:5px;height:1px;background:#334a9a"></div>
<div class="a" style="left:1080px;top:513px;width:1px;height:5px;background:#334a9a"></div>
<div class="t" style="left:1090px;top:509px;font-size:11px;line-height:13px;color:#f4f4f4;font-weight:bold;letter-spacing:-0.3px">Geometry</div>
<div class="a" style="left:1069px;top:524px;width:152px;height:16px;background:#262626"></div>
<div class="a" style="left:1222px;top:524px;width:219px;height:16px;background:#262626"></div>
<div class="a" style="left:1076px;top:528px;width:9px;height:9px;background:#eee;border:1px solid #999"></div>
<div class="a" style="left:1078px;top:532px;width:5px;height:1px;background:#334a9a"></div>
<div class="a" style="left:1080px;top:530px;width:1px;height:5px;background:#334a9a"></div>
<div class="t" style="left:1090px;top:526px;font-size:11px;line-height:13px;color:#f4f4f4;font-weight:bold;letter-spacing:-0.3px">Misc</div>
<div class="a" style="left:1069px;top:541px;width:152px;height:16px;background:#262626"></div>
<div class="a" style="left:1222px;top:541px;width:219px;height:16px;background:#262626"></div>
<div class="a" style="left:1076px;top:545px;width:9px;height:9px;background:#eee;border:1px solid #999"></div>
<div class="a" style="left:1078px;top:549px;width:5px;height:1px;background:#334a9a"></div>
<div class="a" style="left:1080px;top:547px;width:1px;height:5px;background:#334a9a"></div>
<div class="t" style="left:1090px;top:543px;font-size:11px;line-height:13px;color:#f4f4f4;font-weight:bold;letter-spacing:-0.3px">Metrics</div>
<div class="a" style="left:1069px;top:558px;width:152px;height:16px;background:#262626"></div>
<div class="a" style="left:1222px;top:558px;width:219px;height:16px;background:#262626"></div>
<div class="a" style="left:1069px;top:575px;width:152px;height:17px;background:#262626"></div>
<div class="a" style="left:1222px;top:575px;width:219px;height:17px;background:#262626"></div>
<div class="a" style="left:1069px;top:593px;width:152px;height:16px;background:#262626"></div>
<div class="a" style="left:1222px;top:593px;width:219px;height:16px;background:#262626"></div>
<div class="a" style="left:1069px;top:610px;width:152px;height:16px;background:#262626"></div>
<div class="a" style="left:1222px;top:610px;width:219px;height:16px;background:#262626"></div>
<div class="a" style="left:1069px;top:627px;width:152px;height:16px;background:#262626"></div>
<div class="a" style="left:1222px;top:627px;width:219px;height:16px;background:#262626"></div>
<div class="a" style="left:1069px;top:644px;width:152px;height:17px;background:#262626"></div>
<div class="a" style="left:1222px;top:644px;width:219px;height:17px;background:#262626"></div>
<div class="a" style="left:1069px;top:662px;width:152px;height:16px;background:#262626"></div>
<div class="a" style="left:1222px;top:662px;width:219px;height:16px;background:#262626"></div>
<div class="a" style="left:1069px;top:679px;width:152px;height:16px;background:#262626"></div>
<div class="a" style="left:1222px;top:679px;width:219px;height:16px;background:#262626"></div>
<div class="a" style="left:1069px;top:696px;width:152px;height:16px;background:#262626"></div>
<div class="a" style="left:1222px;top:696px;width:219px;height:16px;background:#262626"></div>
<div class="a" style="left:1069px;top:713px;width:152px;height:16px;background:#262626"></div>
<div class="a" style="left:1222px;top:713px;width:219px;height:16px;background:#262626"></div>
<div class="a" style="left:1069px;top:730px;width:152px;height:11px;background:#262626"></div>
<div class="a" style="left:1222px;top:730px;width:219px;height:11px;background:#262626"></div>
<div class="a" style="left:1080px;top:398px;width:1px;height:150px;border-left:1px dotted #777"></div>
<div class="a" style="left:1096px;top:437px;width:1px;height:60px;border-left:1px dotted #777"></div>
<div class="a" style="left:1069px;top:741px;width:372px;height:14px;background:#707070"></div>
<div class="a" style="left:1069px;top:741px;width:14px;height:14px;background:#4e4e4e;border:1px solid #444"></div>
<div class="a" style="left:1083px;top:741px;width:14px;height:14px;background:#5a5a5a"></div>
<svg style="left:1074px;top:744px" width="5" height="8"><path d="M4.5 0v8L0 4z" fill="#eee"/></svg>
<div class="a" style="left:1426px;top:741px;width:15px;height:14px;background:#4e4e4e;border:1px solid #444"></div>
<svg style="left:1432px;top:744px" width="5" height="8"><path d="M0 0v8l4.5-4z" fill="#eee"/></svg>
<div class="a" style="left:1069px;top:758px;width:372px;height:29px;background:#262626;border:1px solid #555"></div>
<div class="t" style="left:1072px;top:759px;font-size:11px;line-height:13px;color:#f0f0f0;letter-spacing:-0.3px">1 of 1 selected:</div>
<div class="a" style="left:0px;top:789px;width:1445px;height:35px;background:#474747;border-top:1px solid #6a6a6a"></div>
<div class="a" style="left:5px;top:797px;width:1px;height:2px;background:#9a9a9a"></div>
<div class="a" style="left:5px;top:800px;width:1px;height:2px;background:#9a9a9a"></div>
<div class="a" style="left:5px;top:803px;width:1px;height:2px;background:#9a9a9a"></div>
<div class="a" style="left:5px;top:806px;width:1px;height:2px;background:#9a9a9a"></div>
<div class="a" style="left:5px;top:809px;width:1px;height:2px;background:#9a9a9a"></div>
<div class="a" style="left:5px;top:812px;width:1px;height:2px;background:#9a9a9a"></div>
<div class="a" style="left:5px;top:815px;width:1px;height:2px;background:#9a9a9a"></div>
<div class="a" style="left:5px;top:818px;width:1px;height:2px;background:#9a9a9a"></div>
<div class="a" style="left:5px;top:821px;width:1px;height:2px;background:#9a9a9a"></div>
<svg style="left:11px;top:797px" width="22" height="22"><path d="M3 7v7c0 4 4 5 8 5h8" fill="none" stroke="#f03010" stroke-width="1.6"/><circle cx="3.5" cy="12" r="1.8" fill="#f03010"/><circle cx="11" cy="19" r="1.8" fill="#f03010"/><path d="M8 6l10 10" stroke="#ccc" stroke-width="1.4"/><path d="M8 6l4 4" stroke="#f0e000" stroke-width="1.4"/><path d="M13 2l1 2 2 .5-2 .5-1 2-1-2-2-.5 2-.5zM19 7l.8 1.5 1.5.5-1.5.5-.8 1.5-.8-1.5-1.5-.5 1.5-.5z" fill="#f0f0b0"/></svg>
<svg style="left:37px;top:800px" width="16" height="16"><path d="M1 1l14 14M15 1L1 15" stroke="#f01010" stroke-width="2.2"/></svg>
<svg style="left:60px;top:800px" width="18" height="17"><rect x="1" y="1" width="16" height="15" fill="#6aa0f0"/><rect x="2.5" y="4" width="13" height="10.5" fill="#333"/><path d="M2.5 7h13M2.5 10h13M7 4v10.5M11 4v10.5" stroke="#ddd" stroke-width="1.5"/></svg>
<div class="a" style="left:83px;top:797px;width:1px;height:22px;background:#303030"></div>
<div class="a" style="left:84px;top:797px;width:1px;height:22px;background:#5e5e5e"></div>
<div class="t" style="left:88px;top:793px;font-size:11px;line-height:13px;color:#ececec;letter-spacing:-0.35px;width:46px;overflow:hidden">Scale X</div>
<div class="a" style="left:89px;top:806px;width:45px;height:16px;background:#262626;border:1px solid #8a8a8a"></div>
<div class="t" style="left:91px;top:808px;font-size:11px;line-height:13px;color:#f0f0f0;letter-spacing:-0.35px">1</div>
<div class="a" style="left:120px;top:807px;width:13px;height:14px;background:#3a3a3a;border-left:1px solid #555"></div>
<svg style="left:124px;top:809px" width="5" height="10"><path d="M0 3l2.5-2.5L5 3M0 7l2.5 2.5L5 7" fill="none" stroke="#ccc" stroke-width="1"/></svg>
<div class="t" style="left:137px;top:793px;font-size:11px;line-height:13px;color:#ececec;letter-spacing:-0.35px;width:46px;overflow:hidden">Scale Y</div>
<div class="a" style="left:138px;top:806px;width:45px;height:16px;background:#262626;border:1px solid #8a8a8a"></div>
<div class="t" style="left:140px;top:808px;font-size:11px;line-height:13px;color:#f0f0f0;letter-spacing:-0.35px">1</div>
<div class="a" style="left:169px;top:807px;width:13px;height:14px;background:#3a3a3a;border-left:1px solid #555"></div>
<svg style="left:173px;top:809px" width="5" height="10"><path d="M0 3l2.5-2.5L5 3M0 7l2.5 2.5L5 7" fill="none" stroke="#ccc" stroke-width="1"/></svg>
<div class="t" style="left:186px;top:793px;font-size:11px;line-height:13px;color:#ececec;letter-spacing:-0.35px;width:46px;overflow:hidden">Scale Z</div>
<div class="a" style="left:187px;top:806px;width:45px;height:16px;background:#262626;border:1px solid #8a8a8a"></div>
<div class="t" style="left:189px;top:808px;font-size:11px;line-height:13px;color:#f0f0f0;letter-spacing:-0.35px">1</div>
<div class="a" style="left:218px;top:807px;width:13px;height:14px;background:#3a3a3a;border-left:1px solid #555"></div>
<svg style="left:222px;top:809px" width="5" height="10"><path d="M0 3l2.5-2.5L5 3M0 7l2.5 2.5L5 7" fill="none" stroke="#ccc" stroke-width="1"/></svg>
<div class="t" style="left:235px;top:793px;font-size:11px;line-height:13px;color:#ececec;letter-spacing:-0.35px;width:46px;overflow:hidden">Size X</div>
<div class="a" style="left:236px;top:806px;width:45px;height:16px;background:#262626;border:1px solid #8a8a8a"></div>
<div class="t" style="left:238px;top:808px;font-size:11px;line-height:13px;color:#f0f0f0;letter-spacing:-0.35px">10.44197</div>
<div class="t" style="left:284px;top:793px;font-size:11px;line-height:13px;color:#ececec;letter-spacing:-0.35px;width:46px;overflow:hidden">Size Y</div>
<div class="a" style="left:285px;top:806px;width:45px;height:16px;background:#262626;border:1px solid #8a8a8a"></div>
<div class="t" style="left:287px;top:808px;font-size:11px;line-height:13px;color:#f0f0f0;letter-spacing:-0.35px">8.068796</div>
<div class="t" style="left:334px;top:793px;font-size:11px;line-height:13px;color:#ececec;letter-spacing:-0.35px;width:46px;overflow:hidden">Size Z</div>
<div class="a" style="left:335px;top:806px;width:45px;height:16px;background:#262626;border:1px solid #8a8a8a"></div>
<div class="t" style="left:337px;top:808px;font-size:11px;line-height:13px;color:#f0f0f0;letter-spacing:-0.35px">0 in</div>
<div class="t" style="left:383px;top:793px;font-size:11px;line-height:13px;color:#ececec;letter-spacing:-0.35px;width:46px;overflow:hidden">Pos X</div>
<div class="a" style="left:384px;top:806px;width:45px;height:16px;background:#262626;border:1px solid #8a8a8a"></div>
<div class="t" style="left:386px;top:808px;font-size:11px;line-height:13px;color:#f0f0f0;letter-spacing:-0.35px">1.253599</div>
<div class="t" style="left:432px;top:793px;font-size:11px;line-height:13px;color:#ececec;letter-spacing:-0.35px;width:46px;overflow:hidden">Pos Y</div>
<div class="a" style="left:433px;top:806px;width:45px;height:16px;background:#262626;border:1px solid #8a8a8a"></div>
<div class="t" style="left:435px;top:808px;font-size:11px;line-height:13px;color:#f0f0f0;letter-spacing:-0.35px">4.253164</div>
<div class="t" style="left:481px;top:793px;font-size:11px;line-height:13px;color:#ececec;letter-spacing:-0.35px;width:46px;overflow:hidden">Pos Z</div>
<div class="a" style="left:482px;top:806px;width:45px;height:16px;background:#262626;border:1px solid #8a8a8a"></div>
<div class="t" style="left:484px;top:808px;font-size:11px;line-height:13px;color:#f0f0f0;letter-spacing:-0.35px">0 in</div>
<div class="t" style="left:530px;top:793px;font-size:11px;line-height:13px;color:#ececec;letter-spacing:-0.35px;width:46px;overflow:hidden">Delta X</div>
<div class="a" style="left:531px;top:806px;width:45px;height:16px;background:#262626;border:1px solid #8a8a8a"></div>
<div class="t" style="left:533px;top:808px;font-size:11px;line-height:13px;color:#f0f0f0;letter-spacing:-0.35px">0 in</div>
<div class="t" style="left:579px;top:793px;font-size:11px;line-height:13px;color:#ececec;letter-spacing:-0.35px;width:46px;overflow:hidden">Delta Y</div>
<div class="a" style="left:580px;top:806px;width:45px;height:16px;background:#262626;border:1px solid #8a8a8a"></div>
<div class="t" style="left:582px;top:808px;font-size:11px;line-height:13px;color:#f0f0f0;letter-spacing:-0.35px">0 in</div>
<div class="t" style="left:628px;top:793px;font-size:11px;line-height:13px;color:#ececec;letter-spacing:-0.35px;width:46px;overflow:hidden">Delta Z</div>
<div class="a" style="left:629px;top:806px;width:45px;height:16px;background:#262626;border:1px solid #8a8a8a"></div>
<div class="t" style="left:631px;top:808px;font-size:11px;line-height:13px;color:#f0f0f0;letter-spacing:-0.35px">0 in</div>
<div class="t" style="left:677px;top:793px;font-size:11px;line-height:13px;color:#ececec;letter-spacing:-0.35px;width:46px;overflow:hidden">Rot X</div>
<div class="a" style="left:678px;top:806px;width:45px;height:16px;background:#262626;border:1px solid #8a8a8a"></div>
<div class="t" style="left:680px;top:808px;font-size:11px;line-height:13px;color:#f0f0f0;letter-spacing:-0.35px">0</div>
<div class="a" style="left:709px;top:807px;width:13px;height:14px;background:#3a3a3a;border-left:1px solid #555"></div>
<svg style="left:713px;top:809px" width="5" height="10"><path d="M0 3l2.5-2.5L5 3M0 7l2.5 2.5L5 7" fill="none" stroke="#ccc" stroke-width="1"/></svg>
<div class="t" style="left:726px;top:793px;font-size:11px;line-height:13px;color:#ececec;letter-spacing:-0.35px;width:46px;overflow:hidden">Rot Y</div>
<div class="a" style="left:727px;top:806px;width:45px;height:16px;background:#262626;border:1px solid #8a8a8a"></div>
<div class="t" style="left:729px;top:808px;font-size:11px;line-height:13px;color:#f0f0f0;letter-spacing:-0.35px">0</div>
<div class="a" style="left:758px;top:807px;width:13px;height:14px;background:#3a3a3a;border-left:1px solid #555"></div>
<svg style="left:762px;top:809px" width="5" height="10"><path d="M0 3l2.5-2.5L5 3M0 7l2.5 2.5L5 7" fill="none" stroke="#ccc" stroke-width="1"/></svg>
<div class="t" style="left:775px;top:793px;font-size:11px;line-height:13px;color:#ececec;letter-spacing:-0.35px;width:46px;overflow:hidden">Rot Z</div>
<div class="a" style="left:776px;top:806px;width:45px;height:16px;background:#262626;border:1px solid #8a8a8a"></div>
<div class="t" style="left:778px;top:808px;font-size:11px;line-height:13px;color:#f0f0f0;letter-spacing:-0.35px">0</div>
<div class="a" style="left:807px;top:807px;width:13px;height:14px;background:#3a3a3a;border-left:1px solid #555"></div>
<svg style="left:811px;top:809px" width="5" height="10"><path d="M0 3l2.5-2.5L5 3M0 7l2.5 2.5L5 7" fill="none" stroke="#ccc" stroke-width="1"/></svg>
<div class="t" style="left:824px;top:793px;font-size:11px;line-height:13px;color:#ececec;letter-spacing:-0.35px;width:46px;overflow:hidden">Delta Dist</div>
<div class="a" style="left:825px;top:806px;width:45px;height:16px;background:#262626;border:1px solid #8a8a8a"></div>
<div class="t" style="left:827px;top:808px;font-size:11px;line-height:13px;color:#f0f0f0;letter-spacing:-0.35px">0 in</div>
<div class="t" style="left:874px;top:793px;font-size:11px;line-height:13px;color:#ececec;letter-spacing:-0.35px;width:46px;overflow:hidden">Delta Ang</div>
<div class="a" style="left:875px;top:806px;width:45px;height:16px;background:#262626;border:1px solid #8a8a8a"></div>
<div class="t" style="left:877px;top:808px;font-size:11px;line-height:13px;color:#f0f0f0;letter-spacing:-0.35px">0</div>
<div class="a" style="left:906px;top:807px;width:13px;height:14px;background:#3a3a3a;border-left:1px solid #555"></div>
<svg style="left:910px;top:809px" width="5" height="10"><path d="M0 3l2.5-2.5L5 3M0 7l2.5 2.5L5 7" fill="none" stroke="#ccc" stroke-width="1"/></svg>
<div class="a" style="left:921px;top:797px;width:1px;height:22px;background:#303030"></div>
<div class="a" style="left:922px;top:797px;width:1px;height:22px;background:#5e5e5e"></div>
<div class="a" style="left:1003px;top:796px;width:22px;height:24px;background:#5a7bb0;border:1px solid #6b8cc0"></div>
<div class="a" style="left:999px;top:797px;width:1px;height:22px;background:#303030"></div>
<div class="a" style="left:1000px;top:797px;width:1px;height:22px;background:#5e5e5e"></div>
<div class="a" style="left:1101px;top:797px;width:1px;height:22px;background:#303030"></div>
<div class="a" style="left:1102px;top:797px;width:1px;height:22px;background:#5e5e5e"></div>
<svg style="left:927px;top:799px" width="18" height="18"><path d="M2 8l5-3h8v6l-5 3H2z" fill="none" stroke="#eee" stroke-width="1.2"/><path d="M2 8h8v6M10 8l5-3" fill="none" stroke="#eee"/><path d="M9 2h7v4" fill="none" stroke="#eee"/></svg>
<svg style="left:951px;top:799px" width="18" height="18"><path d="M2 2h5v5H2zM10 9l4-2h3v5l-4 2h-3z" fill="none" stroke="#eee" stroke-width="1.2"/><path d="M16 2L2 16" stroke="#eee" stroke-width="1.2"/></svg>
<svg style="left:976px;top:799px" width="18" height="18"><path d="M2 14c0-6 4-10 9-10" fill="none" stroke="#6aa0f0" stroke-width="1.4"/><path d="M10 8v8l2-2 1.5 3 1-.5-1.5-3h3z" fill="#eee"/></svg>
<svg style="left:1005px;top:799px" width="18" height="18"><rect x="1.5" y="1.5" width="15" height="15" fill="#10a0a0" stroke="#eee" stroke-width="1.3"/><path d="M2 2h14L2 16z" fill="#00c060"/><path d="M16 2v14H2" fill="none" stroke="#eee"/></svg>
<svg style="left:1029px;top:799px" width="18" height="18"><path d="M2 4v12h12z" fill="#10a0a0" stroke="#eee"/><path d="M9 2h7v6h-4" fill="none" stroke="#eee" stroke-width="1.3"/></svg>
<svg style="left:1053px;top:799px" width="18" height="18"><path d="M2 4v12h12z" fill="#20e020" stroke="#eee"/><path d="M9 2h7v6h-4" fill="none" stroke="#eee" stroke-width="1.3"/></svg>
<svg style="left:1077px;top:799px" width="18" height="18"><path d="M2 6h10v8H2z" fill="#20d020" stroke="#eee"/><path d="M5 9h5v6" fill="none" stroke="#222"/><path d="M12 2h4v5" fill="none" stroke="#eee" stroke-width="1.3"/></svg>
<svg style="left:1106px;top:799px" width="18" height="18"><path d="M3 8c0-4 4-6 8-4M3 4v4h4" fill="none" stroke="#999" stroke-width="1.3"/><path d="M9 9v8l2-2 1.5 3 1-.5-1.5-3h3z" fill="#aaa"/></svg>
<svg style="left:1130px;top:799px" width="18" height="18"><path d="M2 2l14 14" stroke="#bbb" stroke-dasharray="2 1"/><rect x="3" y="3" width="4" height="3" fill="#f02020"/><rect x="11" y="11" width="4" height="4" fill="#6aa0f0"/><path d="M12 4l4 0M14 2v4" stroke="#f0d000"/></svg>
<svg style="left:1154px;top:799px" width="18" height="18"><path d="M2 15l5-11 5 11z" fill="none" stroke="#eee" stroke-width="1.3"/><path d="M8 15l4-8 4 8z" fill="none" stroke="#f02020" stroke-width="1.5"/></svg>
<svg style="left:1178px;top:799px" width="18" height="18"><path d="M4 3h10v6H4zM1 11h16v5H1z" fill="none" stroke="#eee" stroke-width="1.3"/><path d="M7 6h4" stroke="#eee"/></svg>
<svg style="left:1202px;top:799px" width="18" height="18"><rect x="2.5" y="2.5" width="13" height="13" fill="none" stroke="#eee" stroke-width="1.2"/><path d="M2 16L16 2" stroke="#f02020" stroke-width="1.3"/><rect x="1" y="1" width="3" height="3" fill="#6aa0f0"/><rect x="14" y="1" width="3" height="3" fill="#6aa0f0"/><rect x="1" y="14" width="3" height="3" fill="#6aa0f0"/><rect x="14" y="14" width="3" height="3" fill="#6aa0f0"/></svg>
<svg style="left:1226px;top:799px" width="18" height="18"><rect x="2.5" y="2.5" width="13" height="13" fill="#c01010" stroke="#eee" stroke-width="1.2"/><circle cx="9" cy="9" r="3" fill="#f0e000"/><rect x="1" y="1" width="3" height="3" fill="#6aa0f0"/><rect x="14" y="1" width="3" height="3" fill="#6aa0f0"/><rect x="1" y="14" width="3" height="3" fill="#6aa0f0"/><rect x="14" y="14" width="3" height="3" fill="#6aa0f0"/></svg>
<svg style="left:1250px;top:799px" width="18" height="18"><path d="M3 6h9v10H3zM12 6l4-3" fill="none" stroke="#aaa" stroke-width="1.2"/><circle cx="7.5" cy="11" r="2.5" fill="none" stroke="#aaa"/></svg>
<svg style="left:1274px;top:799px" width="18" height="18"><path d="M2 8h10v8H2zM8 12l8-8" fill="none" stroke="#aaa" stroke-width="1.2"/></svg>
<svg style="left:1298px;top:799px" width="18" height="18"><path d="M3 7l4-4h10l-4 4z" fill="none" stroke="#eee" stroke-width="1.2"/><path d="M8 6l6 5" stroke="#f02020" stroke-width="1.3"/><rect x="10.5" y="10.5" width="6" height="6" fill="none" stroke="#eee"/></svg>
<svg style="left:1322px;top:799px" width="18" height="18"><path d="M7 7l4-4h6l-4 4z" fill="none" stroke="#eee" stroke-width="1.2"/><path d="M4 13l11-6" stroke="#f02020" stroke-width="1.3"/><rect x="1.5" y="11.5" width="5" height="5" fill="none" stroke="#eee"/></svg>
<svg style="left:1346px;top:799px" width="18" height="18"><path d="M4 8h10v8H4zM9 2v6" fill="none" stroke="#aaa" stroke-width="1.2"/><circle cx="13" cy="4" r="2" fill="#aaa"/></svg>
<svg style="left:1371px;top:799px" width="18" height="18"><path d="M2 16h14V2" fill="none" stroke="#eee" stroke-width="1.3"/><path d="M2 16L16 4" stroke="#f02020" stroke-width="1.3"/><rect x="0" y="14" width="4" height="4" fill="#6aa0f0"/><rect x="14" y="14" width="4" height="4" fill="#6aa0f0"/><rect x="14" y="1" width="4" height="4" fill="#6aa0f0"/></svg>
<svg style="left:1395px;top:799px" width="18" height="18"><rect x="2.5" y="2.5" width="13" height="13" fill="#2060b0" stroke="#eee" stroke-width="1.2"/><path d="M2 16L16 2" stroke="#f02020" stroke-width="1.3"/><rect x="4" y="4" width="10" height="10" fill="none" stroke="#eee"/></svg>
<div class="a" style="left:0px;top:823px;width:1445px;height:24px;background:#535353;border-top:1px solid #3e3e3e"></div>
<div class="t" style="left:7px;top:828px;font-size:11px;line-height:13px;color:#f0f0f0;letter-spacing:-0.3px">Edit the selected object(s)</div>
<div class="t" style="left:1044px;top:831px;font-size:11px;line-height:13px;color:#f0f0f0;letter-spacing:-0.4px">SNAP</div>
<div class="t" style="left:1077px;top:831px;font-size:11px;line-height:13px;color:#f0f0f0;letter-spacing:-0.4px">GEO</div>
<div class="a" style="left:1110px;top:828px;width:5px;height:5px;border:1px solid #eee"></div>
<div class="t" style="left:1110px;top:838px;font-size:7px;line-height:9px;color:#eee;">X</div>
<div class="a" style="left:1118px;top:829px;width:62px;height:16px;background:#262626;border:1px solid #9a9a9a"></div>
<div class="t" style="left:1122px;top:832px;font-size:11px;line-height:13px;color:#f0f0f0;letter-spacing:-0.3px">3.289826 in</div>
<div class="a" style="left:1189px;top:828px;width:5px;height:5px;border:1px solid #eee"></div>
<div class="t" style="left:1189px;top:838px;font-size:7px;line-height:9px;color:#eee;">Y</div>
<div class="a" style="left:1197px;top:829px;width:62px;height:16px;background:#262626;border:1px solid #9a9a9a"></div>
<div class="t" style="left:1201px;top:832px;font-size:11px;line-height:13px;color:#f0f0f0;letter-spacing:-0.3px">4.807189 in</div>
<div class="a" style="left:1269px;top:828px;width:5px;height:5px;border:1px solid #999"></div>
<div class="t" style="left:1269px;top:838px;font-size:7px;line-height:9px;color:#999;">Z</div>
<div class="a" style="left:1277px;top:829px;width:61px;height:16px;background:#262626;border:1px solid #666"></div>
<div class="t" style="left:1281px;top:832px;font-size:11px;line-height:13px;color:#777;letter-spacing:-0.3px">0 in</div>
<div class="t" style="left:1347px;top:828px;font-size:11px;line-height:13px;color:#f0f0f0;letter-spacing:-0.3px">243%</div>
<div class="t" style="left:1395px;top:829px;font-size:11px;line-height:13px;color:#f0f0f0;letter-spacing:-0.3px">3:22 PM</div>
<div class="a" style="left:14px;top:183px;width:1034px;height:591px;overflow:hidden"><svg style="left:-14px;top:-183px" width="1445" height="847"><line x1="153" y1="252" x2="188" y2="252" stroke="#ff00ff" stroke-width="1.8"/><line x1="199" y1="252" x2="235.5" y2="252" stroke="#ff00ff" stroke-width="1.8"/><line x1="237.5" y1="252" x2="269" y2="252" stroke="#ff00ff" stroke-width="1.8"/><line x1="280" y1="252" x2="316" y2="252" stroke="#ff00ff" stroke-width="1.8"/><line x1="319" y1="252" x2="353" y2="252" stroke="#ff00ff" stroke-width="1.8"/><line x1="364" y1="252" x2="402" y2="252" stroke="#ff00ff" stroke-width="1.8"/><line x1="153" y1="252" x2="153" y2="289" stroke="#ff00ff" stroke-width="1.8"/><line x1="153" y1="300" x2="153" y2="302" stroke="#ff00ff" stroke-width="1.8"/><line x1="153" y1="305" x2="153" y2="342" stroke="#ff00ff" stroke-width="1.8"/><line x1="153" y1="352" x2="153" y2="357" stroke="#ff00ff" stroke-width="1.8"/><line x1="402" y1="252" x2="402" y2="283" stroke="#ff00ff" stroke-width="1.8"/><polyline points="153.5,359.5 153.5,450.5" fill="none" stroke="#000" stroke-width="5" stroke-linejoin="miter" stroke-linecap="square"/><polyline points="153.5,359.5 153.5,450.5" fill="none" stroke="#bdbdbd" stroke-width="1" stroke-linejoin="miter" stroke-linecap="butt"/><polyline points="153.5,480.5 153.5,588.5" fill="none" stroke="#000" stroke-width="5" stroke-linejoin="miter" stroke-linecap="square"/><polyline points="153.5,480.5 153.5,588.5" fill="none" stroke="#bdbdbd" stroke-width="1" stroke-linejoin="miter" stroke-linecap="butt"/><polyline points="153.5,588.5 153.5,625.5" fill="none" stroke="#ff00ff" stroke-width="4" stroke-linecap="butt"/><polyline points="153.5,588.5 153.5,625.5" fill="none" stroke="#ffd0ff" stroke-width="1" stroke-linecap="butt"/><polyline points="153.5,625.5 153.5,713.5 401.5,713.5 401.5,599.5" fill="none" stroke="#000" stroke-width="5" stroke-linejoin="miter" stroke-linecap="square"/><polyline points="153.5,625.5 153.5,713.5 401.5,713.5 401.5,599.5" fill="none" stroke="#bdbdbd" stroke-width="1" stroke-linejoin="miter" stroke-linecap="butt"/><polyline points="153.5,359.5 288.5,359.5" fill="none" stroke="#000" stroke-width="5" stroke-linejoin="miter" stroke-linecap="square"/><polyline points="153.5,359.5 288.5,359.5" fill="none" stroke="#bdbdbd" stroke-width="1" stroke-linejoin="miter" stroke-linecap="butt"/><polyline points="288.5,359.5 325.5,359.5" fill="none" stroke="#ff00ff" stroke-width="4.5" stroke-linecap="butt"/><polyline points="325.5,359.5 401.5,359.5" fill="none" stroke="#000" stroke-width="5" stroke-linejoin="miter" stroke-linecap="square"/><polyline points="325.5,359.5 401.5,359.5" fill="none" stroke="#bdbdbd" stroke-width="1" stroke-linejoin="miter" stroke-linecap="butt"/><polyline points="401.5,354.5 401.5,365.5" fill="none" stroke="#000" stroke-width="5" stroke-linejoin="miter" stroke-linecap="square"/><polyline points="401.5,354.5 401.5,365.5" fill="none" stroke="#bdbdbd" stroke-width="1" stroke-linejoin="miter" stroke-linecap="butt"/><rect x="117.5" y="437.5" width="34" height="56" rx="0" fill="none" stroke="#999" stroke-width="1"/><rect x="186.5" y="713.5" width="183" height="25" rx="0" fill="none" stroke="#000" stroke-width="1.2"/><polyline points="186.5,711.5 369.5,711.5" fill="none" stroke="#000" stroke-width="1"/><line x1="153" y1="450" x2="175" y2="471" stroke="#007000" stroke-width="2.3"/><path d="M175 471 A30.4 30.4 0 0 1 158 479" fill="none" stroke="#008000" stroke-width="1.1"/><polyline points="246.5,361.5 246.5,434.5 366.5,434.5" fill="none" stroke="#000" stroke-width="5" stroke-linejoin="miter" stroke-linecap="square"/><polyline points="246.5,361.5 246.5,434.5 366.5,434.5" fill="none" stroke="#bdbdbd" stroke-width="1" stroke-linejoin="miter" stroke-linecap="butt"/><polyline points="268.5,402.5 275.5,402.5 275.5,434.5" fill="none" stroke="#000" stroke-width="5" stroke-linejoin="miter" stroke-linecap="square"/><polyline points="268.5,402.5 275.5,402.5 275.5,434.5" fill="none" stroke="#bdbdbd" stroke-width="1" stroke-linejoin="miter" stroke-linecap="butt"/><polyline points="249.5,402.5 251.5,402.5" fill="none" stroke="#000" stroke-width="5" stroke-linejoin="miter" stroke-linecap="square"/><polyline points="249.5,402.5 251.5,402.5" fill="none" stroke="#bdbdbd" stroke-width="1" stroke-linejoin="miter" stroke-linecap="butt"/><polyline points="249.5,407.5 274.5,407.5" fill="none" stroke="#800080" stroke-width="1.2"/><polyline points="337.5,400.5 337.5,434.5" fill="none" stroke="#000" stroke-width="5" stroke-linejoin="miter" stroke-linecap="square"/><polyline points="337.5,400.5 337.5,434.5" fill="none" stroke="#bdbdbd" stroke-width="1" stroke-linejoin="miter" stroke-linecap="butt"/><polyline points="361.5,400.5 363.5,400.5 363.5,434.5" fill="none" stroke="#000" stroke-width="5" stroke-linejoin="miter" stroke-linecap="square"/><polyline points="361.5,400.5 363.5,400.5 363.5,434.5" fill="none" stroke="#bdbdbd" stroke-width="1" stroke-linejoin="miter" stroke-linecap="butt"/><rect x="278.5" y="400.5" width="58" height="30" rx="0" fill="none" stroke="#000" stroke-width="1.2"/><rect x="280.5" y="402.5" width="27" height="21" rx="0" fill="none" stroke="#999" stroke-width="0.8"/><rect x="309.5" y="402.5" width="25" height="21" rx="0" fill="none" stroke="#999" stroke-width="0.8"/><rect x="311.5" y="404.5" width="21" height="16" rx="0" fill="none" stroke="#888" stroke-width="0.8"/><polyline points="280.5,425.5 334.5,425.5" fill="none" stroke="#999" stroke-width="0.8"/><line x1="251" y1="400" x2="266" y2="384" stroke="#007000" stroke-width="2.3"/><path d="M266 384 A21.9 21.9 0 0 1 273 401" fill="none" stroke="#008000" stroke-width="1.1"/><line x1="357" y1="400" x2="344" y2="387" stroke="#007000" stroke-width="2.3"/><path d="M344 387 A18.4 18.4 0 0 0 340 400" fill="none" stroke="#008000" stroke-width="1.1"/><rect x="337.5" y="437.5" width="62" height="34" rx="0" fill="none" stroke="#000" stroke-width="1"/><polyline points="347.5,437.5 347.5,471.5" fill="none" stroke="#000" stroke-width="1"/><polyline points="356.5,437.5 356.5,471.5" fill="none" stroke="#000" stroke-width="1"/><polyline points="365.5,437.5 365.5,471.5" fill="none" stroke="#000" stroke-width="1"/><line x1="367" y1="436" x2="389" y2="456" stroke="#007000" stroke-width="2.3"/><path d="M389 456 A29.7 29.7 0 0 0 396 437" fill="none" stroke="#008000" stroke-width="1.1"/><line x1="401" y1="365" x2="380" y2="386" stroke="#007000" stroke-width="2.3"/><path d="M380 386 A29.7 29.7 0 0 0 399 395" fill="none" stroke="#008000" stroke-width="1.1"/><line x1="402" y1="285" x2="379" y2="306" stroke="#007000" stroke-width="2.3"/><path d="M379 306 A31.1 31.1 0 0 0 400 315" fill="none" stroke="#008000" stroke-width="1.1"/><line x1="401" y1="354" x2="379" y2="333" stroke="#007000" stroke-width="2.3"/><path d="M379 333 A30.4 30.4 0 0 1 400 324" fill="none" stroke="#008000" stroke-width="1.1"/><polyline points="400.5,325.5 400.5,354.5" fill="none" stroke="#000" stroke-width="1"/><polyline points="401.5,395.5 401.5,599.5" fill="none" stroke="#000" stroke-width="5" stroke-linejoin="miter" stroke-linecap="square"/><polyline points="401.5,395.5 401.5,599.5" fill="none" stroke="#bdbdbd" stroke-width="1" stroke-linejoin="miter" stroke-linecap="butt"/><polyline points="399.5,433.5 403.5,433.5" fill="none" stroke="#000" stroke-width="5" stroke-linejoin="miter" stroke-linecap="square"/><polyline points="399.5,433.5 403.5,433.5" fill="none" stroke="#bdbdbd" stroke-width="1" stroke-linejoin="miter" stroke-linecap="butt"/><polyline points="404.5,430.5 481.5,430.5 513.5,458.5 500.5,480.5 473.5,463.5 426.5,463.5 426.5,576.5 492.5,576.5" fill="none" stroke="#800080" stroke-width="1.3"/><polyline points="404.5,441.5 477.5,441.5 507.5,462.5" fill="none" stroke="#800080" stroke-width="1.2"/><polyline points="414.5,430.5 414.5,470.5" fill="none" stroke="#800080" stroke-width="1.2"/><polyline points="414.5,480.5 414.5,510.5" fill="none" stroke="#800080" stroke-width="1"/><polyline points="414.5,520.5 414.5,540.5" fill="none" stroke="#800080" stroke-width="1"/><polyline points="414.5,560.5 414.5,570.5 425.5,585.5 425.5,598.5" fill="none" stroke="#800080" stroke-width="1.2"/><path d="M418 430 a8 7 0 0 1 16 0" fill="none" stroke="#800080" stroke-width="1.2"/><path d="M439 430 a8 7 0 0 1 16 0" fill="none" stroke="#800080" stroke-width="1.2"/><path d="M460 430 a8 7 0 0 1 16 0" fill="none" stroke="#800080" stroke-width="1.2"/><path d="M487 437 a8 7 0 0 1 16 6" fill="none" stroke="#800080" stroke-width="1.2"/><rect x="458.5" y="443.5" width="16" height="20" rx="0" fill="none" stroke="#00008b" stroke-width="1.5"/><polygon points="474,444 492,454 484,470 470,462" fill="none" stroke="#00008b" stroke-width="1.5"/><polyline points="431.5,441.5 431.5,463.5" fill="none" stroke="#999" stroke-width="1"/><polyline points="453.5,441.5 453.5,463.5" fill="none" stroke="#999" stroke-width="1"/><rect x="404.5" y="481.5" width="21" height="27" rx="0" fill="none" stroke="#999" stroke-width="0.8"/><circle cx="409" cy="487" r="3.5" fill="none" stroke="#777" stroke-width="0.9"/><circle cx="419" cy="487" r="3.5" fill="none" stroke="#777" stroke-width="0.9"/><circle cx="409" cy="501" r="3.5" fill="none" stroke="#777" stroke-width="0.9"/><circle cx="419" cy="501" r="3.5" fill="none" stroke="#777" stroke-width="0.9"/><rect x="404.5" y="529.5" width="24" height="29" rx="0" fill="none" stroke="#999" stroke-width="0.8"/><polyline points="428.5,528.5 428.5,559.5" fill="none" stroke="#999" stroke-width="1"/><polyline points="431.5,600.5 466.5,600.5" fill="none" stroke="#ff00ff" stroke-width="4" stroke-linecap="butt"/><polyline points="404.5,600.5 431.5,600.5" fill="none" stroke="#000" stroke-width="5" stroke-linejoin="miter" stroke-linecap="square"/><polyline points="404.5,600.5 431.5,600.5" fill="none" stroke="#bdbdbd" stroke-width="1" stroke-linejoin="miter" stroke-linecap="butt"/><polyline points="466.5,600.5 496.5,600.5 496.5,552.5" fill="none" stroke="#000" stroke-width="5" stroke-linejoin="miter" stroke-linecap="square"/><polyline points="466.5,600.5 496.5,600.5 496.5,552.5" fill="none" stroke="#bdbdbd" stroke-width="1" stroke-linejoin="miter" stroke-linecap="butt"/><rect x="470.5" y="586.5" width="26" height="12" rx="0" fill="none" stroke="#800080" stroke-width="1.2"/><line x1="498" y1="552" x2="521" y2="531" stroke="#007000" stroke-width="2.3"/><path d="M521 531 A31.1 31.1 0 0 1 531 552" fill="none" stroke="#008000" stroke-width="1.1"/><polyline points="545.5,500.5 528.5,517.5 540.5,524.5 528.5,531.5 545.5,548.5" fill="none" stroke="#007000" stroke-width="1.8"/><polyline points="545.5,498.5 545.5,500.5" fill="none" stroke="#000" stroke-width="5" stroke-linejoin="miter" stroke-linecap="square"/><polyline points="545.5,498.5 545.5,500.5" fill="none" stroke="#bdbdbd" stroke-width="1" stroke-linejoin="miter" stroke-linecap="butt"/><polyline points="545.5,548.5 545.5,552.5" fill="none" stroke="#000" stroke-width="5" stroke-linejoin="miter" stroke-linecap="square"/><polyline points="545.5,548.5 545.5,552.5" fill="none" stroke="#bdbdbd" stroke-width="1" stroke-linejoin="miter" stroke-linecap="butt"/><polyline points="401.5,319.5 418.5,319.5" fill="none" stroke="#000" stroke-width="5" stroke-linejoin="miter" stroke-linecap="square"/><polyline points="401.5,319.5 418.5,319.5" fill="none" stroke="#bdbdbd" stroke-width="1" stroke-linejoin="miter" stroke-linecap="butt"/><polyline points="417.5,316.5 448.5,316.5" fill="none" stroke="#888" stroke-width="1"/><line x1="418" y1="320" x2="439" y2="342" stroke="#007000" stroke-width="2.3"/><path d="M439 342 A30.4 30.4 0 0 0 448 320" fill="none" stroke="#008000" stroke-width="1.1"/><polyline points="448.5,319.5 457.5,319.5 460.5,314.5" fill="none" stroke="#000" stroke-width="5" stroke-linejoin="miter" stroke-linecap="square"/><polyline points="448.5,319.5 457.5,319.5 460.5,314.5" fill="none" stroke="#bdbdbd" stroke-width="1" stroke-linejoin="miter" stroke-linecap="butt"/><polyline points="460.5,314.5 478.5,297.5" fill="none" stroke="#ff00ff" stroke-width="4" stroke-linecap="butt"/><polyline points="460.5,314.5 478.5,297.5" fill="none" stroke="#ffd0ff" stroke-width="1" stroke-linecap="butt"/><polyline points="478.5,297.5 481.5,295.5" fill="none" stroke="#000" stroke-width="5" stroke-linejoin="miter" stroke-linecap="square"/><polyline points="478.5,297.5 481.5,295.5" fill="none" stroke="#bdbdbd" stroke-width="1" stroke-linejoin="miter" stroke-linecap="butt"/><polyline points="482.5,295.5 521.5,295.5" fill="none" stroke="#ff00ff" stroke-width="4.5" stroke-linecap="butt"/><polyline points="522.5,295.5 525.5,298.5" fill="none" stroke="#000" stroke-width="5" stroke-linejoin="miter" stroke-linecap="square"/><polyline points="522.5,295.5 525.5,298.5" fill="none" stroke="#bdbdbd" stroke-width="1" stroke-linejoin="miter" stroke-linecap="butt"/><polyline points="526.5,298.5 544.5,314.5" fill="none" stroke="#ff00ff" stroke-width="4" stroke-linecap="butt"/><polyline points="526.5,298.5 544.5,314.5" fill="none" stroke="#ffd0ff" stroke-width="1" stroke-linecap="butt"/><polyline points="544.5,314.5 548.5,319.5 564.5,319.5" fill="none" stroke="#000" stroke-width="5" stroke-linejoin="miter" stroke-linecap="square"/><polyline points="544.5,314.5 548.5,319.5 564.5,319.5" fill="none" stroke="#bdbdbd" stroke-width="1" stroke-linejoin="miter" stroke-linecap="butt"/><polyline points="564.5,258.5 564.5,315.5" fill="none" stroke="#ff00ff" stroke-width="4" stroke-linecap="butt"/><polyline points="564.5,258.5 564.5,315.5" fill="none" stroke="#ffd0ff" stroke-width="1" stroke-linecap="butt"/><polyline points="564.5,315.5 564.5,320.5" fill="none" stroke="#000" stroke-width="5" stroke-linejoin="miter" stroke-linecap="square"/><polyline points="564.5,315.5 564.5,320.5" fill="none" stroke="#bdbdbd" stroke-width="1" stroke-linejoin="miter" stroke-linecap="butt"/><rect x="562" y="322" width="4" height="48" fill="#fff" stroke="#800080" stroke-width="1.5"/><polyline points="564.5,258.5 564.5,252.5 619.5,252.5" fill="none" stroke="#000" stroke-width="5" stroke-linejoin="miter" stroke-linecap="square"/><polyline points="564.5,258.5 564.5,252.5 619.5,252.5" fill="none" stroke="#bdbdbd" stroke-width="1" stroke-linejoin="miter" stroke-linecap="butt"/><polyline points="619.5,252.5 753.5,252.5" fill="none" stroke="#008000" stroke-width="2"/><polyline points="619.5,248.5 753.5,248.5" fill="none" stroke="#888" stroke-width="1"/><polyline points="753.5,252.5 806.5,252.5 806.5,445.5 795.5,456.5 762.5,456.5" fill="none" stroke="#000" stroke-width="5" stroke-linejoin="miter" stroke-linecap="square"/><polyline points="753.5,252.5 806.5,252.5 806.5,445.5 795.5,456.5 762.5,456.5" fill="none" stroke="#bdbdbd" stroke-width="1" stroke-linejoin="miter" stroke-linecap="butt"/><rect x="759.5" y="323.5" width="31" height="61" rx="5" fill="none" stroke="#000" stroke-width="1"/><rect x="777" y="325.5" width="27" height="57" fill="#fff" stroke="#000" stroke-width="4"/><rect x="777" y="325.5" width="27" height="57" fill="none" stroke="#ddd" stroke-width="1"/><polygon points="779,336 800,342 800,365 779,373" fill="none" stroke="#000" stroke-width="1.8"/><polyline points="775.5,254.5 783.5,259.7 775.5,265.3 783.5,271.5 775.5,276.7 783.5,282.3 775.5,288.5 783.5,293.7 775.5,299.3 783.5,305.5 775.5,310.7 783.5,316.3 775.5,322.5" fill="none" stroke="#007000" stroke-width="1.8"/><polyline points="775.5,386.5 783.5,391.6 775.5,397.2 783.5,402.8 775.5,408.3 783.5,413.9 775.5,419.5 783.5,425.1 775.5,430.7 783.5,436.2 775.5,441.8 783.5,447.4 775.5,453.5" fill="none" stroke="#007000" stroke-width="1.8"/><polyline points="793.5,253.5 793.5,321.5" fill="none" stroke="#800080" stroke-width="1.4"/><polyline points="793.5,386.5 793.5,453.5" fill="none" stroke="#800080" stroke-width="1.4"/><polyline points="564.5,422.5 564.5,456.5 599.5,456.5 599.5,461.5" fill="none" stroke="#000" stroke-width="5" stroke-linejoin="miter" stroke-linecap="square"/><polyline points="564.5,422.5 564.5,456.5 599.5,456.5 599.5,461.5" fill="none" stroke="#bdbdbd" stroke-width="1" stroke-linejoin="miter" stroke-linecap="butt"/><polyline points="601.5,454.5 762.5,454.5" fill="none" stroke="#000" stroke-width="1"/><line x1="599" y1="462" x2="576" y2="482" stroke="#007000" stroke-width="2.3"/><path d="M576 482 A30.5 30.5 0 0 0 597 491" fill="none" stroke="#008000" stroke-width="1.1"/><line x1="762" y1="459" x2="785" y2="482" stroke="#007000" stroke-width="2.3"/><path d="M785 482 A32.5 32.5 0 0 1 763 492" fill="none" stroke="#008000" stroke-width="1.1"/><polyline points="599.5,491.5 599.5,499.5" fill="none" stroke="#000" stroke-width="4" stroke-linejoin="miter" stroke-linecap="butt"/><polyline points="543.5,497.5 622.5,497.5" fill="none" stroke="#000" stroke-width="4.5" stroke-linejoin="miter" stroke-linecap="butt"/><polyline points="622.5,494.5 709.5,494.5" fill="none" stroke="#000" stroke-width="1.2"/><polyline points="622.5,497.5 634.5,506.5 634.5,520.5" fill="none" stroke="#000" stroke-width="5" stroke-linejoin="miter" stroke-linecap="square"/><polyline points="622.5,497.5 634.5,506.5 634.5,520.5" fill="none" stroke="#bdbdbd" stroke-width="1" stroke-linejoin="miter" stroke-linecap="butt"/><line x1="634" y1="552" x2="612" y2="528" stroke="#007000" stroke-width="2.3"/><path d="M612 528 A32.6 32.6 0 0 1 633 519" fill="none" stroke="#008000" stroke-width="1.1"/><polyline points="528.5,552.5 630.5,552.5 630.5,575.5" fill="none" stroke="#000" stroke-width="5" stroke-linejoin="miter" stroke-linecap="square"/><polyline points="528.5,552.5 630.5,552.5 630.5,575.5" fill="none" stroke="#bdbdbd" stroke-width="1" stroke-linejoin="miter" stroke-linecap="butt"/><polyline points="573.5,498.5 573.5,552.5" fill="none" stroke="#000" stroke-width="5" stroke-linejoin="miter" stroke-linecap="square"/><polyline points="573.5,498.5 573.5,552.5" fill="none" stroke="#bdbdbd" stroke-width="1" stroke-linejoin="miter" stroke-linecap="butt"/><rect x="576.5" y="499.5" width="21" height="25" rx="0" fill="none" stroke="#800080" stroke-width="1"/><ellipse cx="587" cy="511" rx="7.5" ry="9.5" fill="none" stroke="#00008b" stroke-width="1.6"/><ellipse cx="587" cy="511" rx="5" ry="7" fill="none" stroke="#00008b" stroke-width="1"/><rect x="577.5" y="528.5" width="9" height="18" rx="0" fill="none" stroke="#00008b" stroke-width="1.3"/><ellipse cx="595" cy="537" rx="7" ry="6" fill="none" stroke="#00008b" stroke-width="1.3"/><polyline points="548.5,500.5 548.5,518.5" fill="none" stroke="#800080" stroke-width="1.2"/><polyline points="548.5,528.5 548.5,550.5" fill="none" stroke="#800080" stroke-width="1.2"/><polyline points="495.5,677.5 495.5,554.5 499.5,554.5" fill="none" stroke="#000" stroke-width="5" stroke-linejoin="miter" stroke-linecap="square"/><polyline points="495.5,677.5 495.5,554.5 499.5,554.5" fill="none" stroke="#bdbdbd" stroke-width="1" stroke-linejoin="miter" stroke-linecap="butt"/><line x1="499" y1="552" x2="521" y2="531" stroke="#007000" stroke-width="2.3"/><path d="M521 531 A30.4 30.4 0 0 1 531 552" fill="none" stroke="#008000" stroke-width="1.1"/><rect x="627.5" y="578.5" width="7" height="8" rx="0" fill="none" stroke="#000" stroke-width="1.5"/><rect x="627.5" y="643.5" width="7" height="8" rx="0" fill="none" stroke="#000" stroke-width="1.5"/><circle cx="631" cy="582.5" r="2.2" fill="#222"/><circle cx="631" cy="647.5" r="2.2" fill="#222"/><polyline points="630.5,655.5 630.5,677.5" fill="none" stroke="#000" stroke-width="5" stroke-linejoin="miter" stroke-linecap="square"/><polyline points="630.5,655.5 630.5,677.5" fill="none" stroke="#bdbdbd" stroke-width="1" stroke-linejoin="miter" stroke-linecap="butt"/><polyline points="495.5,677.5 537.5,677.5" fill="none" stroke="#000" stroke-width="5" stroke-linejoin="miter" stroke-linecap="butt"/><polyline points="537.5,677.5 576.5,677.5" fill="none" stroke="#ff00ff" stroke-width="4" stroke-linecap="butt"/><polyline points="576.5,677.5 649.5,677.5" fill="none" stroke="#000" stroke-width="5" stroke-linejoin="miter" stroke-linecap="butt"/><polyline points="649.5,677.5 665.5,677.5" fill="none" stroke="#ff00ff" stroke-width="4" stroke-linecap="butt"/><line x1="665" y1="677" x2="688" y2="654" stroke="#007000" stroke-width="2.3"/><path d="M688 654 A32.5 32.5 0 0 1 700 677" fill="none" stroke="#008000" stroke-width="1.1"/><polyline points="700.5,677.5 714.5,677.5" fill="none" stroke="#ff00ff" stroke-width="4" stroke-linecap="butt"/><polyline points="714.5,677.5 786.5,677.5" fill="none" stroke="#000" stroke-width="5" stroke-linejoin="miter" stroke-linecap="butt"/><polyline points="786.5,678.5 826.5,678.5" fill="none" stroke="#ff00ff" stroke-width="4" stroke-linecap="butt"/><polyline points="826.5,678.5 870.5,678.5" fill="none" stroke="#000" stroke-width="5" stroke-linejoin="miter" stroke-linecap="butt"/><polyline points="707.5,496.5 711.5,496.5" fill="none" stroke="#000" stroke-width="4" stroke-linejoin="miter" stroke-linecap="butt"/><polyline points="711,496 718.0,486 725,496" fill="none" stroke="#007000" stroke-width="1.8"/><polyline points="738,496 746.0,486 754,496" fill="none" stroke="#007000" stroke-width="1.8"/><polyline points="707.5,497.5 693.5,507.5 693.5,583.5" fill="none" stroke="#000" stroke-width="5" stroke-linejoin="miter" stroke-linecap="square"/><polyline points="707.5,497.5 693.5,507.5 693.5,583.5" fill="none" stroke="#bdbdbd" stroke-width="1" stroke-linejoin="miter" stroke-linecap="butt"/><polyline points="754.5,497.5 774.5,497.5 789.5,510.5 789.5,526.5" fill="none" stroke="#000" stroke-width="5" stroke-linejoin="miter" stroke-linecap="square"/><polyline points="754.5,497.5 774.5,497.5 789.5,510.5 789.5,526.5" fill="none" stroke="#bdbdbd" stroke-width="1" stroke-linejoin="miter" stroke-linecap="butt"/><polyline points="696.5,512.5 785.5,512.5" fill="none" stroke="#800080" stroke-width="1.1"/><polyline points="696.5,515.5 785.5,515.5" fill="none" stroke="#800080" stroke-width="1.1"/><polyline points="693.5,526.5 789.5,526.5" fill="none" stroke="#000" stroke-width="5" stroke-linejoin="miter" stroke-linecap="square"/><polyline points="693.5,526.5 789.5,526.5" fill="none" stroke="#bdbdbd" stroke-width="1" stroke-linejoin="miter" stroke-linecap="butt"/><polyline points="731.5,528.5 731.5,678.5" fill="none" stroke="#000" stroke-width="5" stroke-linejoin="miter" stroke-linecap="square"/><polyline points="731.5,528.5 731.5,678.5" fill="none" stroke="#bdbdbd" stroke-width="1" stroke-linejoin="miter" stroke-linecap="butt"/><rect x="696.5" y="543.5" width="18" height="22" rx="0" fill="none" stroke="#00008b" stroke-width="1.5"/><polyline points="696.5,543.5 714.5,565.5" fill="none" stroke="#00008b" stroke-width="1"/><polyline points="714.5,543.5 696.5,565.5" fill="none" stroke="#00008b" stroke-width="1"/><polyline points="754.5,528.5 754.5,562.5" fill="none" stroke="#000" stroke-width="1"/><polyline points="754.5,528.5 789.5,562.5" fill="none" stroke="#00008b" stroke-width="1"/><polyline points="789.5,528.5 754.5,562.5" fill="none" stroke="#00008b" stroke-width="1"/><polyline points="734.5,563.5 788.5,563.5 788.5,567.5" fill="none" stroke="#000" stroke-width="5" stroke-linejoin="miter" stroke-linecap="square"/><polyline points="734.5,563.5 788.5,563.5 788.5,567.5" fill="none" stroke="#bdbdbd" stroke-width="1" stroke-linejoin="miter" stroke-linecap="butt"/><rect x="734.5" y="572.5" width="8" height="19" rx="0" fill="none" stroke="#00008b" stroke-width="1.3"/><circle cx="751" cy="581" r="8" fill="none" stroke="#00008b" stroke-width="1.3"/><line x1="789" y1="592" x2="773" y2="576" stroke="#007000" stroke-width="2.3"/><path d="M773 576 A22.6 22.6 0 0 1 789 565" fill="none" stroke="#008000" stroke-width="1.1"/><polyline points="734.5,600.5 802.5,600.5" fill="none" stroke="#000" stroke-width="5" stroke-linejoin="miter" stroke-linecap="square"/><polyline points="734.5,600.5 802.5,600.5" fill="none" stroke="#bdbdbd" stroke-width="1" stroke-linejoin="miter" stroke-linecap="butt"/><polyline points="686.5,583.5 729.5,600.5" fill="none" stroke="#800080" stroke-width="1.2"/><polyline points="688.5,598.5 729.5,598.5" fill="none" stroke="#800080" stroke-width="1.4"/><polyline points="688.5,606.5 729.5,606.5" fill="none" stroke="#800080" stroke-width="1.4"/><polyline points="688.5,615.5 729.5,615.5" fill="none" stroke="#800080" stroke-width="1.4"/><polyline points="688.5,623.5 729.5,623.5" fill="none" stroke="#800080" stroke-width="1.4"/><polyline points="688.5,632.5 729.5,632.5" fill="none" stroke="#800080" stroke-width="1.4"/><polyline points="691.5,583.5 691.5,632.5" fill="none" stroke="#800080" stroke-width="1.4"/><circle cx="688" cy="627" r="3" fill="none" stroke="#800080" stroke-width="1.5"/><polyline points="749.5,618.5 749.5,660.5 784.5,660.5 784.5,677.5" fill="none" stroke="#800080" stroke-width="1.3"/><polyline points="749.5,618.5 799.5,618.5 799.5,602.5" fill="none" stroke="#800080" stroke-width="1.3"/><polyline points="746.5,615.5 781.5,615.5" fill="none" stroke="#800080" stroke-width="1.1"/><polyline points="746.5,627.5 746.5,663.5 782.5,663.5" fill="none" stroke="#800080" stroke-width="1.1"/><polyline points="850.5,621.5 850.5,660.5 828.5,660.5 828.5,677.5" fill="none" stroke="#800080" stroke-width="1.3"/><polyline points="853.5,627.5 853.5,663.5 830.5,663.5" fill="none" stroke="#800080" stroke-width="1.1"/><polyline points="869.5,600.5 869.5,678.5" fill="none" stroke="#000" stroke-width="5" stroke-linejoin="miter" stroke-linecap="square"/><polyline points="869.5,600.5 869.5,678.5" fill="none" stroke="#bdbdbd" stroke-width="1" stroke-linejoin="miter" stroke-linecap="butt"/><polyline points="808.5,321.5 821.5,321.5 827.5,314.5" fill="none" stroke="#000" stroke-width="5" stroke-linejoin="miter" stroke-linecap="square"/><polyline points="808.5,321.5 821.5,321.5 827.5,314.5" fill="none" stroke="#bdbdbd" stroke-width="1" stroke-linejoin="miter" stroke-linecap="butt"/><polyline points="827.5,314.5 843.5,298.5" fill="none" stroke="#ff00ff" stroke-width="4" stroke-linecap="butt"/><polyline points="827.5,314.5 843.5,298.5" fill="none" stroke="#ffd0ff" stroke-width="1" stroke-linecap="butt"/><polyline points="843.5,298.5 847.5,295.5" fill="none" stroke="#000" stroke-width="5" stroke-linejoin="miter" stroke-linecap="square"/><polyline points="843.5,298.5 847.5,295.5" fill="none" stroke="#bdbdbd" stroke-width="1" stroke-linejoin="miter" stroke-linecap="butt"/><polyline points="848.5,295.5 888.5,295.5" fill="none" stroke="#ff00ff" stroke-width="4.5" stroke-linecap="butt"/><polyline points="889.5,295.5 892.5,298.5" fill="none" stroke="#000" stroke-width="5" stroke-linejoin="miter" stroke-linecap="square"/><polyline points="889.5,295.5 892.5,298.5" fill="none" stroke="#bdbdbd" stroke-width="1" stroke-linejoin="miter" stroke-linecap="butt"/><polyline points="892.5,298.5 911.5,315.5" fill="none" stroke="#ff00ff" stroke-width="4" stroke-linecap="butt"/><polyline points="892.5,298.5 911.5,315.5" fill="none" stroke="#ffd0ff" stroke-width="1" stroke-linecap="butt"/><polyline points="911.5,315.5 915.5,319.5 924.5,319.5" fill="none" stroke="#000" stroke-width="5" stroke-linejoin="miter" stroke-linecap="square"/><polyline points="911.5,315.5 915.5,319.5 924.5,319.5" fill="none" stroke="#bdbdbd" stroke-width="1" stroke-linejoin="miter" stroke-linecap="butt"/><polyline points="924.5,316.5 955.5,316.5" fill="none" stroke="#888" stroke-width="1"/><line x1="955" y1="320" x2="932" y2="341" stroke="#007000" stroke-width="2.3"/><path d="M932 341 A31.1 31.1 0 0 1 924 320" fill="none" stroke="#008000" stroke-width="1.1"/><polyline points="961.5,318.5 961.5,485.5" fill="none" stroke="#000" stroke-width="5" stroke-linejoin="miter" stroke-linecap="square"/><polyline points="961.5,318.5 961.5,485.5" fill="none" stroke="#bdbdbd" stroke-width="1" stroke-linejoin="miter" stroke-linecap="butt"/><polyline points="957.5,318.5 964.5,318.5" fill="none" stroke="#000" stroke-width="5" stroke-linejoin="miter" stroke-linecap="square"/><polyline points="957.5,318.5 964.5,318.5" fill="none" stroke="#bdbdbd" stroke-width="1" stroke-linejoin="miter" stroke-linecap="butt"/><polyline points="961.5,485.5 961.5,506.5" fill="none" stroke="#ff00ff" stroke-width="4" stroke-linecap="butt"/><polyline points="961.5,507.5 961.5,514.5" fill="none" stroke="#000" stroke-width="5" stroke-linejoin="miter" stroke-linecap="square"/><polyline points="961.5,507.5 961.5,514.5" fill="none" stroke="#bdbdbd" stroke-width="1" stroke-linejoin="miter" stroke-linecap="butt"/><polyline points="961.5,515.5 961.5,547.5" fill="none" stroke="#000" stroke-width="5" stroke-linejoin="miter" stroke-linecap="square"/><polyline points="961.5,515.5 961.5,547.5" fill="none" stroke="#bdbdbd" stroke-width="1" stroke-linejoin="miter" stroke-linecap="butt"/><polyline points="961.5,547.5 961.5,569.5" fill="none" stroke="#ff00ff" stroke-width="4" stroke-linecap="butt"/><polyline points="961.5,569.5 961.5,620.5 893.5,620.5" fill="none" stroke="#000" stroke-width="5" stroke-linejoin="miter" stroke-linecap="square"/><polyline points="961.5,569.5 961.5,620.5 893.5,620.5" fill="none" stroke="#bdbdbd" stroke-width="1" stroke-linejoin="miter" stroke-linecap="butt"/><polyline points="893.5,619.5 938.5,619.5" fill="none" stroke="#ff00ff" stroke-width="4" stroke-linecap="butt"/><polyline points="838.5,620.5 893.5,620.5" fill="none" stroke="#000" stroke-width="5" stroke-linejoin="miter" stroke-linecap="square"/><polyline points="838.5,620.5 893.5,620.5" fill="none" stroke="#bdbdbd" stroke-width="1" stroke-linejoin="miter" stroke-linecap="butt"/><polyline points="790.5,513.5 811.5,513.5" fill="none" stroke="#000" stroke-width="5" stroke-linejoin="miter" stroke-linecap="square"/><polyline points="790.5,513.5 811.5,513.5" fill="none" stroke="#bdbdbd" stroke-width="1" stroke-linejoin="miter" stroke-linecap="butt"/><polyline points="811.5,513.5 819.2,501.5 827.5,513.5 835.8,501.5 844.5,513.5" fill="none" stroke="#007000" stroke-width="1.8"/><polyline points="844.5,513.5 959.5,513.5" fill="none" stroke="#000" stroke-width="5" stroke-linejoin="miter" stroke-linecap="square"/><polyline points="844.5,513.5 959.5,513.5" fill="none" stroke="#bdbdbd" stroke-width="1" stroke-linejoin="miter" stroke-linecap="butt"/><rect x="864" y="515" width="95" height="24" fill="none" stroke="#800080" stroke-width="1.2"/><polyline points="869.5,515.5 869.5,539.5" fill="none" stroke="#800080" stroke-width="1.2"/><ellipse cx="889" cy="526" rx="10" ry="8" fill="none" stroke="#00008b" stroke-width="1.6"/><ellipse cx="889" cy="527" rx="6.5" ry="5.5" fill="none" stroke="#00008b" stroke-width="0.9"/><ellipse cx="941" cy="526" rx="10" ry="8" fill="none" stroke="#00008b" stroke-width="1.6"/><ellipse cx="941" cy="527" rx="6.5" ry="5.5" fill="none" stroke="#00008b" stroke-width="0.9"/><rect x="871.5" y="579.5" width="88" height="40" rx="0" fill="none" stroke="#800080" stroke-width="1.2"/><polyline points="882.5,579.5 882.5,619.5" fill="none" stroke="#800080" stroke-width="1.1"/><polyline points="948.5,579.5 948.5,619.5" fill="none" stroke="#800080" stroke-width="1.1"/><rect x="871.5" y="580.5" width="10" height="10" rx="0" fill="none" stroke="#800080" stroke-width="1.2"/><circle cx="876" cy="585" r="3.3" fill="none" stroke="#800080" stroke-width="1"/><rect x="871.5" y="608.5" width="10" height="10" rx="0" fill="none" stroke="#800080" stroke-width="1.2"/><circle cx="876" cy="613" r="3.3" fill="none" stroke="#800080" stroke-width="1"/><rect x="949.5" y="580.5" width="10" height="10" rx="0" fill="none" stroke="#800080" stroke-width="1.2"/><circle cx="954" cy="585" r="3.3" fill="none" stroke="#800080" stroke-width="1"/><rect x="949.5" y="608.5" width="10" height="10" rx="0" fill="none" stroke="#800080" stroke-width="1.2"/><circle cx="954" cy="613" r="3.3" fill="none" stroke="#800080" stroke-width="1"/><ellipse cx="915.5" cy="598" rx="29" ry="15" fill="none" stroke="#00008b" stroke-width="1.3"/><polyline points="790.5,600.5 804.5,600.5" fill="none" stroke="#000" stroke-width="5" stroke-linejoin="miter" stroke-linecap="square"/><polyline points="790.5,600.5 804.5,600.5" fill="none" stroke="#bdbdbd" stroke-width="1" stroke-linejoin="miter" stroke-linecap="butt"/><polyline points="804.5,600.5 812.5,587.5 820.5,600.5 828.5,587.5 836.5,600.5" fill="none" stroke="#007000" stroke-width="1.8"/><polyline points="836.5,600.5 840.5,600.5 840.5,620.5" fill="none" stroke="#000" stroke-width="5" stroke-linejoin="miter" stroke-linecap="square"/><polyline points="836.5,600.5 840.5,600.5 840.5,620.5" fill="none" stroke="#bdbdbd" stroke-width="1" stroke-linejoin="miter" stroke-linecap="butt"/><polyline points="862.5,600.5 869.5,600.5" fill="none" stroke="#000" stroke-width="5" stroke-linejoin="miter" stroke-linecap="square"/><polyline points="862.5,600.5 869.5,600.5" fill="none" stroke="#bdbdbd" stroke-width="1" stroke-linejoin="miter" stroke-linecap="butt"/><polyline points="846,600 854.0,587 862,600" fill="none" stroke="#007000" stroke-width="1.8"/><polyline points="842.5,605.5 867.5,605.5" fill="none" stroke="#800080" stroke-width="1.1"/><polyline points="634.5,183.5 634.5,394.5" fill="none" stroke="#222" stroke-width="1.2"/><polyline points="639.5,397.5 1046.5,397.5" fill="none" stroke="#222" stroke-width="1.2"/><rect x="631" y="394.5" width="5" height="5" transform="rotate(45 633.8 397.3)" fill="#ffee00" stroke="#000" stroke-width="0.8"/><rect x="635.5" y="399" width="5" height="5" transform="rotate(45 638.2 401.6)" fill="#00dd00" stroke="#000" stroke-width="0.8"/><text x="640" y="394" font-family="Liberation Sans" font-size="11" fill="#222">Z</text></svg></div></body></html>
